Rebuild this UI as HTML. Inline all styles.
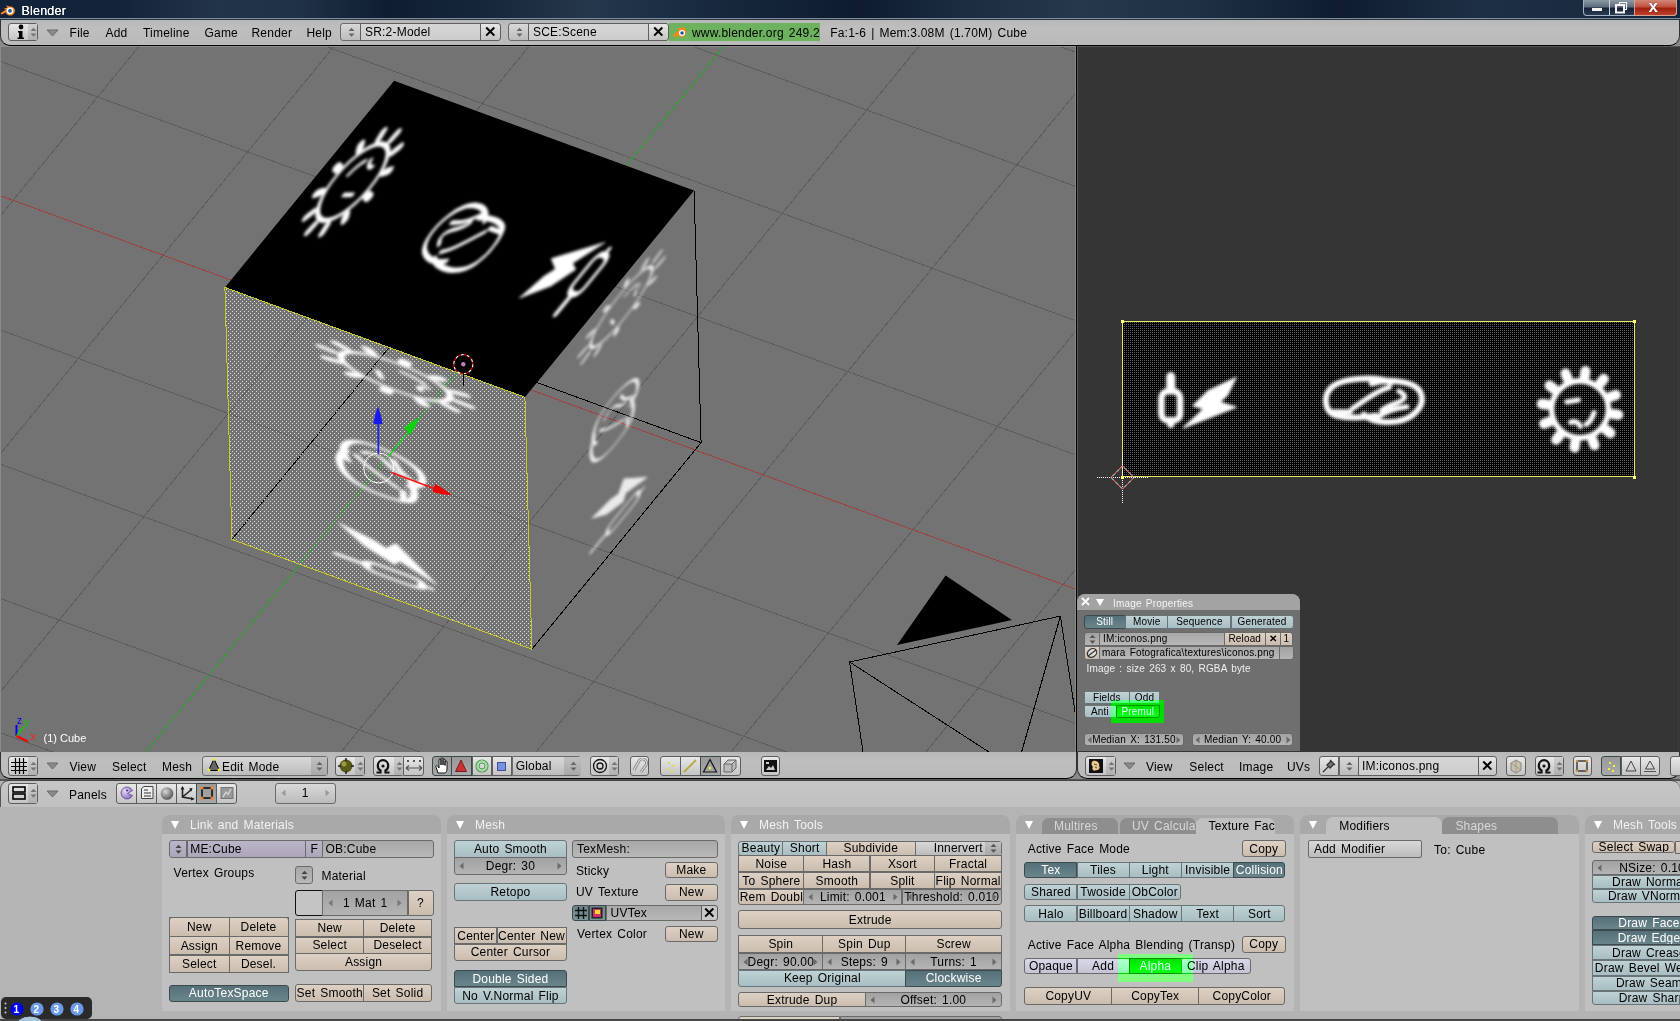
<!DOCTYPE html><html><head><meta charset="utf-8"><style>
html,body{margin:0;padding:0;}
body{width:1680px;height:1021px;position:relative;overflow:hidden;background:#b4b4b4;font-family:"Liberation Sans",sans-serif;}
body>div,body>span,body>svg{position:absolute;}
.t{position:absolute;white-space:nowrap;line-height:1.15;}
</style></head><body>
<div style="left:0;top:0;width:1680px;height:18px;background:linear-gradient(90deg,#12223a 0.0%,#13233a 7.1%,#22344a 13.1%,#1f3146 17.9%,#0f1d31 23.2%,#152539 28.0%,#25374b 35.1%,#182a3f 41.7%,#0e1b2e 51.2%,#1b2c41 57.1%,#26384c 64.3%,#1e3044 71.4%,#0f1c2f 79.8%,#1e3045 88.1%,#1a2b40 94.0%,#16263a 100.0%)"></div>
<div style="left:0;top:18px;width:1680px;height:1px;background:#7d8c9c"></div>
<div style="left:0;top:19px;width:1680px;height:1px;background:#2a3440"></div>
<svg style="left:0;top:2px" width="16" height="14" viewBox="0 0 16 14">
      <path d="M0.5,11 L6,7.5 L3.5,6 L7.5,6 L6,3.5 L10,4.5 C13,4.5 15,6.5 15,8.5 C15,11.5 12.5,13.5 10,13.5 C7.5,13.5 6,12 6,10.5 L1.5,12.5 Z" fill="#f5841f"/>
      <circle cx="10" cy="8.8" r="3.4" fill="#fff"/><circle cx="10" cy="8.8" r="1.9" fill="#1e56a0"/></svg>
<span class="t" style="left:21.5px;top:4px;font-size:12.5px;color:#fff;word-spacing:1.56px;letter-spacing:0.213px;text-shadow:0 0 0.4px #fff;">Blender</span>
<div style="left:1583px;top:0;width:94px;height:16px;border:1px solid #9fb0c0;border-top:none;border-radius:0 0 4px 4px;box-sizing:border-box;background:linear-gradient(#8d9aa6 0%,#5e6e7e 45%,#16243a 55%,#2a3a50 100%)"></div>
<div style="left:1634px;top:0;width:43px;height:16px;border:1px solid #d8a090;border-top:none;border-radius:0 0 4px 0;box-sizing:border-box;background:linear-gradient(#d08878 0%,#c05040 45%,#a02010 55%,#c04030 100%)"></div>
<div style="left:1609px;top:0;width:1px;height:15px;background:#c8d4e0"></div>
<div style="left:1592px;top:8px;width:10px;height:3px;background:#f4f4f4"></div>
<svg style="left:1614px;top:1px" width="14" height="13"><path d="M5.5,3 V1.5 H12.5 V8.5 H10.5" fill="none" stroke="#f4f4f4" stroke-width="1.2"/><rect x="2" y="4" width="8" height="7.5" fill="none" stroke="#f4f4f4" stroke-width="2"/></svg>
<span class="t" style="left:1648.5px;top:-3.5px;font-size:17px;color:#fff;word-spacing:2.12px;letter-spacing:0.289px;font-weight:bold;text-shadow:0 0 1px #400;">x</span>
<div style="left:0px;top:20px;width:1680px;height:26px;background:#8a8a8a"></div>
<div style="left:0px;top:20px;width:1680px;height:26px;background:linear-gradient(#b8b8b8,#bebebe 30%,#bababa);border-bottom:1px solid #000;border-left:1px solid #333;border-right:1px solid #333;box-sizing:border-box;border-radius:0 0 10px 10px;"></div>
<div style="left:0px;top:46px;width:1076px;height:706px;background:#737373"></div>
<svg style="left:0;top:46px" width="1076" height="706" viewBox="0 46 1076 706">
<defs><clipPath id="vc"><rect x="0" y="46" width="1076" height="706"/></clipPath>
<filter id="bl" x="-20%" y="-20%" width="140%" height="140%"><feGaussianBlur stdDeviation="1.5"/></filter>
<filter id="halo" x="-20%" y="-20%" width="140%" height="140%"><feGaussianBlur in="SourceAlpha" stdDeviation="2.2" result="b"/><feFlood flood-color="#000" flood-opacity="0.3"/><feComposite in2="b" operator="in" result="h"/><feGaussianBlur in="SourceGraphic" stdDeviation="1.4" result="s"/><feMerge><feMergeNode in="h"/><feMergeNode in="s"/></feMerge></filter>
<pattern id="stip" width="4" height="4" patternUnits="userSpaceOnUse" x="2" y="1"><rect width="1" height="1" fill="#dcdcdc"/><rect x="2" y="2" width="1" height="1" fill="#dcdcdc"/></pattern>
<symbol id="tex" viewBox="0 0 263 80" width="263" height="80" overflow="visible"><g fill="none" stroke="#fff" stroke-linecap="round" stroke-linejoin="round">
 <path d="M25,28.5 L25,35" stroke-width="3.20"/>
 <rect x="20.2" y="36" width="9.6" height="15" rx="3.5" stroke-width="2.30"/>
 <path d="M25,51 L25,53" stroke-width="2.60"/>
 <path d="M58.5,29 L44,36 L36.5,43.5 L42,45 L31.5,54.8 L58.5,44.2 L50,41.6 L54,38 Z" fill="#fff" stroke="#fff" stroke-width="0.50"/>
 <path d="M138,31.5 C131,28.5 112,28.5 106.5,35 C103,39.5 104,47 110,48.5 C116,50 124,49.5 130,48.5 M128,32 C136,29.5 150,30.5 153,36.5 C156,43 150,50 141,51.5 C133,52.5 127,51 124,48" stroke-width="2.10"/>
 <path d="M108,46.5 L117,46.5 M118,45 C124,41 130,36 137,34 M142,36 C146,38 146,40 141,42 C138,43 135,44 133,46 M130,50 C134,47 138,45 146,44" stroke-width="1.80"/>
 <circle cx="234.8" cy="45.3" r="14.6" stroke-width="2.00"/>
 <path d="M237.2,28.5 L237.6,25.7 M245.3,31.9 L247.0,29.7 M250.6,38.9 L253.2,37.9 M251.6,47.7 L254.4,48.1 M248.2,55.8 L250.4,57.5 M241.2,61.1 L242.2,63.7 M232.4,62.1 L232.0,64.9 M224.3,58.7 L222.6,60.9 M219.0,51.7 L216.4,52.7 M218.0,42.9 L215.2,42.5 M221.4,34.8 L219.2,33.1 M228.4,29.5 L227.4,26.9" stroke-width="3.60"/>
 <path d="M228,41.5 L234,40.5 M242,47 C241,50 240,52 238,53 M230,52 C232,51 234,52 235,54" stroke-width="1.80"/>
</g></symbol>
</defs>
<rect x="0" y="46" width="1076" height="706" fill="#737373"/>
<path d="M-2352.2,945.8 L1247.8,2263.4 M-2267.6,842.5 L1332.4,2160.1 M-2183.0,739.2 L1417.0,2056.8 M-2098.4,635.9 L1501.6,1953.5 M-2013.8,532.6 L1586.2,1850.2 M-1929.2,429.3 L1670.8,1746.9 M-1844.6,326.0 L1755.4,1643.6 M-1760.0,222.7 L1840.0,1540.3 M-1675.4,119.4 L1924.6,1437.0 M-1590.8,16.1 L2009.2,1333.7 M-1506.2,-87.2 L2093.8,1230.4 M-1421.6,-190.5 L2178.4,1127.1 M-1252.4,-397.1 L2347.6,920.5 M-1167.8,-500.4 L2432.2,817.2 M-1083.2,-603.7 L2516.8,713.9 M-998.6,-707.0 L2601.4,610.6 M-914.0,-810.3 L2686.0,507.3 M-829.4,-913.6 L2770.6,404.0 M-744.8,-1016.9 L2855.2,300.7 M-660.2,-1120.2 L2939.8,197.4 M-575.6,-1223.5 L3024.4,94.1 M-491.0,-1326.8 L3109.0,-9.2 M-406.4,-1430.1 L3193.6,-112.5 M-321.8,-1533.4 L3278.2,-215.8 M-2352.2,945.8 L-321.8,-1533.4 M-2202.2,1000.7 L-171.8,-1478.5 M-2052.2,1055.6 L-21.8,-1423.6 M-1902.2,1110.5 L128.2,-1368.7 M-1752.2,1165.4 L278.2,-1313.8 M-1602.2,1220.3 L428.2,-1258.9 M-1452.2,1275.2 L578.2,-1204.0 M-1302.2,1330.1 L728.2,-1149.1 M-1152.2,1385.0 L878.2,-1094.2 M-1002.2,1439.9 L1028.2,-1039.3 M-852.2,1494.8 L1178.2,-984.4 M-702.2,1549.7 L1328.2,-929.5 M-402.2,1659.5 L1628.2,-819.7 M-252.2,1714.4 L1778.2,-764.8 M-102.2,1769.3 L1928.2,-709.9 M47.8,1824.2 L2078.2,-655.0 M197.8,1879.1 L2228.2,-600.1 M347.8,1934.0 L2378.2,-545.2 M497.8,1988.9 L2528.2,-490.3 M647.8,2043.8 L2678.2,-435.4 M797.8,2098.7 L2828.2,-380.5 M947.8,2153.6 L2978.2,-325.6 M1097.8,2208.5 L3128.2,-270.7 M1247.8,2263.4 L3278.2,-215.8" stroke="#5d5d5d" stroke-width="1" fill="none" shape-rendering="crispEdges"/>
<path d="M-1337.0,-293.8 L2263.0,1023.8" stroke="#a04040" stroke-width="1" shape-rendering="crispEdges"/>
<path d="M-552.2,1604.6 L1478.2,-874.6" stroke="#30a030" stroke-width="1" shape-rendering="crispEdges"/>
<path d="M897,645 L945.6,575.4 L1011.9,620 Z" fill="#000"/>
<path d="M849.6,662 L1060.4,616.1 M849.6,662 L863,752 M849.6,662 L989,752 M1060.4,616.1 L1021.6,752 M1060.4,616.1 L1076,718" stroke="#000" stroke-width="1" fill="none" shape-rendering="crispEdges"/>
<path d="M231.9,539.4 L401.1,332.8 L701.1,442.6" stroke="#000" stroke-width="1" fill="none" shape-rendering="crispEdges"/>
<g filter="url(#halo)" opacity="0.85"><g transform="matrix(-0.02662 -0.95817 2.11500 -2.58250 531.90 649.20)"><g fill="none" stroke="#fff" stroke-linecap="round" stroke-linejoin="round">
 <path d="M25,28.5 L25,35" stroke-width="2.24"/>
 <rect x="20.2" y="36" width="9.6" height="15" rx="3.5" stroke-width="1.61"/>
 <path d="M25,51 L25,53" stroke-width="1.82"/>
 <path d="M58.5,29 L44,36 L36.5,43.5 L42,45 L31.5,54.8 L58.5,44.2 L50,41.6 L54,38 Z" fill="#fff" stroke="#fff" stroke-width="0.35"/>
 <path d="M138,31.5 C131,28.5 112,28.5 106.5,35 C103,39.5 104,47 110,48.5 C116,50 124,49.5 130,48.5 M128,32 C136,29.5 150,30.5 153,36.5 C156,43 150,50 141,51.5 C133,52.5 127,51 124,48" stroke-width="1.47"/>
 <path d="M108,46.5 L117,46.5 M118,45 C124,41 130,36 137,34 M142,36 C146,38 146,40 141,42 C138,43 135,44 133,46 M130,50 C134,47 138,45 146,44" stroke-width="1.26"/>
 <circle cx="234.8" cy="45.3" r="14.6" stroke-width="1.40"/>
 <path d="M237.2,28.5 L237.6,25.7 M245.3,31.9 L247.0,29.7 M250.6,38.9 L253.2,37.9 M251.6,47.7 L254.4,48.1 M248.2,55.8 L250.4,57.5 M241.2,61.1 L242.2,63.7 M232.4,62.1 L232.0,64.9 M224.3,58.7 L222.6,60.9 M219.0,51.7 L216.4,52.7 M218.0,42.9 L215.2,42.5 M221.4,34.8 L219.2,33.1 M228.4,29.5 L227.4,26.9" stroke-width="2.52"/>
 <path d="M228,41.5 L234,40.5 M242,47 C241,50 240,52 238,53 M230,52 C232,51 234,52 235,54" stroke-width="1.26"/>
</g></g></g>
<path d="M224.9,287.4 L524.9,397.2 L531.9,649.2 L231.9,539.4 Z" fill="url(#stip)"/>
<g filter="url(#halo)"><g transform="matrix(-0.02662 -0.95817 3.75000 1.37250 231.90 539.40)"><g fill="none" stroke="#fff" stroke-linecap="round" stroke-linejoin="round">
 <path d="M25,28.5 L25,35" stroke-width="3.20"/>
 <rect x="20.2" y="36" width="9.6" height="15" rx="3.5" stroke-width="2.30"/>
 <path d="M25,51 L25,53" stroke-width="2.60"/>
 <path d="M58.5,29 L44,36 L36.5,43.5 L42,45 L31.5,54.8 L58.5,44.2 L50,41.6 L54,38 Z" fill="#fff" stroke="#fff" stroke-width="0.50"/>
 <path d="M138,31.5 C131,28.5 112,28.5 106.5,35 C103,39.5 104,47 110,48.5 C116,50 124,49.5 130,48.5 M128,32 C136,29.5 150,30.5 153,36.5 C156,43 150,50 141,51.5 C133,52.5 127,51 124,48" stroke-width="2.10"/>
 <path d="M108,46.5 L117,46.5 M118,45 C124,41 130,36 137,34 M142,36 C146,38 146,40 141,42 C138,43 135,44 133,46 M130,50 C134,47 138,45 146,44" stroke-width="1.80"/>
 <circle cx="234.8" cy="45.3" r="14.6" stroke-width="2.00"/>
 <path d="M237.2,28.5 L237.6,25.7 M245.3,31.9 L247.0,29.7 M250.6,38.9 L253.2,37.9 M251.6,47.7 L254.4,48.1 M248.2,55.8 L250.4,57.5 M241.2,61.1 L242.2,63.7 M232.4,62.1 L232.0,64.9 M224.3,58.7 L222.6,60.9 M219.0,51.7 L216.4,52.7 M218.0,42.9 L215.2,42.5 M221.4,34.8 L219.2,33.1 M228.4,29.5 L227.4,26.9" stroke-width="3.60"/>
 <path d="M228,41.5 L234,40.5 M242,47 C241,50 240,52 238,53 M230,52 C232,51 234,52 235,54" stroke-width="1.80"/>
</g></g></g>
<path d="M224.9,287.4 L524.9,397.2 L694.1,190.6 L394.1,80.8 Z" fill="#000"/>
<g filter="url(#bl)"><g transform="matrix(-1.14068 -0.41749 2.11500 -2.58250 524.90 397.20)"><g fill="none" stroke="#fff" stroke-linecap="round" stroke-linejoin="round">
 <path d="M25,28.5 L25,35" stroke-width="3.20"/>
 <rect x="20.2" y="36" width="9.6" height="15" rx="3.5" stroke-width="2.30"/>
 <path d="M25,51 L25,53" stroke-width="2.60"/>
 <path d="M58.5,29 L44,36 L36.5,43.5 L42,45 L31.5,54.8 L58.5,44.2 L50,41.6 L54,38 Z" fill="#fff" stroke="#fff" stroke-width="0.50"/>
 <path d="M138,31.5 C131,28.5 112,28.5 106.5,35 C103,39.5 104,47 110,48.5 C116,50 124,49.5 130,48.5 M128,32 C136,29.5 150,30.5 153,36.5 C156,43 150,50 141,51.5 C133,52.5 127,51 124,48" stroke-width="2.10"/>
 <path d="M108,46.5 L117,46.5 M118,45 C124,41 130,36 137,34 M142,36 C146,38 146,40 141,42 C138,43 135,44 133,46 M130,50 C134,47 138,45 146,44" stroke-width="1.80"/>
 <circle cx="234.8" cy="45.3" r="14.6" stroke-width="2.00"/>
 <path d="M237.2,28.5 L237.6,25.7 M245.3,31.9 L247.0,29.7 M250.6,38.9 L253.2,37.9 M251.6,47.7 L254.4,48.1 M248.2,55.8 L250.4,57.5 M241.2,61.1 L242.2,63.7 M232.4,62.1 L232.0,64.9 M224.3,58.7 L222.6,60.9 M219.0,51.7 L216.4,52.7 M218.0,42.9 L215.2,42.5 M221.4,34.8 L219.2,33.1 M228.4,29.5 L227.4,26.9" stroke-width="3.60"/>
 <path d="M228,41.5 L234,40.5 M242,47 C241,50 240,52 238,53 M230,52 C232,51 234,52 235,54" stroke-width="1.80"/>
</g></g></g>
<path d="M694.1,190.6 L701.1,442.6 L531.9,649.2" stroke="#000" stroke-width="1" fill="none" shape-rendering="crispEdges"/>
<path d="M224.9,287.4 L524.9,397.2 L531.9,649.2 L231.9,539.4 Z" stroke="#c8c828" stroke-width="1" fill="none" shape-rendering="crispEdges"/>
<circle cx="463.3" cy="364.2" r="9.5" fill="none" stroke="#fff" stroke-width="1.2" stroke-dasharray="3 3"/>
<circle cx="463.3" cy="364.2" r="9.5" fill="none" stroke="#d00" stroke-width="1.2" stroke-dasharray="3 3" stroke-dashoffset="3"/>
<path d="M463.3,354 L463.3,374 M453,364.2 L473.5,364.2" stroke="#000" stroke-width="1" opacity="0"/>
<path d="M463.5,373 L463.5,386" stroke="#000" stroke-width="1"/>
<circle cx="463.3" cy="364.2" r="2.2" fill="#c080c0"/>
<circle cx="378.7" cy="468" r="15" fill="none" stroke="#fff" stroke-width="1"/>
<path d="M378.3,454 L378.3,420" stroke="#2020ff" stroke-width="1.6"/><path d="M373.5,424 C374,418 376,412 377.8,406.5 C380,412 382,418 382.5,424 Z" fill="#1818f0"/>
<path d="M388.5,456.5 L410,430" stroke="#20d020" stroke-width="1.2"/><path d="M404,428 C408,424 413,420 419.5,417.5 C417,424 414,430 410.5,434.5 Z" fill="#10d010"/>
<path d="M391.5,472.5 L438,490" stroke="#ff1010" stroke-width="1.5"/><path d="M435,484 C441,487 447,491 452,495 C446,495 440,494 432.5,492 Z" fill="#f00000"/>
<path d="M16.5,736 L16.5,725" stroke="#0000ff" stroke-width="2"/><path d="M16.5,736 L23.5,727" stroke="#00d000" stroke-width="1.5"/><path d="M16.5,736 L28,741.5" stroke="#ff0000" stroke-width="2"/>
<text x="17" y="724" font-family="Liberation Sans" font-size="10" fill="#0000ff">z</text><text x="24" y="726" font-family="Liberation Sans" font-size="10" fill="#00d000">y</text><text x="30.5" y="739.5" font-family="Liberation Sans" font-size="10" fill="#ff2020">x</text>
<text x="43.5" y="741.5" font-family="Liberation Sans" font-size="11" fill="#fff">(1) Cube</text>
</svg>
<div style="left:1077px;top:46px;width:603px;height:706px;background:#353535"></div>
<div style="left:1076px;top:46px;width:1px;height:706px;background:#000"></div>
<div style="left:0px;top:46px;width:1076px;height:1px;background:#8c8c8c"></div>
<div style="left:0px;top:46px;width:1px;height:706px;background:#8c8c8c"></div>
<div style="left:1075px;top:46px;width:1px;height:706px;background:#888"></div>
<div style="left:1077px;top:46px;width:603px;height:1px;background:#585858"></div>
<div style="left:1077px;top:46px;width:1px;height:706px;background:#585858"></div>
<div style="left:1678px;top:46px;width:1px;height:706px;background:#3c3c3c"></div>
<div style="left:0px;top:752px;width:1680px;height:28px;background:#8a8a8a"></div>
<div style="left:0px;top:752px;width:1077px;height:27px;background:linear-gradient(#b8b8b8,#bebebe 30%,#bababa);border-bottom:1px solid #000;border-left:1px solid #333;border-right:1px solid #333;box-sizing:border-box;border-radius:0 0 10px 10px;"></div>
<div style="left:1077px;top:752px;width:603px;height:27px;background:linear-gradient(#b8b8b8,#bebebe 30%,#bababa);border-bottom:1px solid #000;border-left:1px solid #333;border-right:1px solid #333;box-sizing:border-box;border-radius:0 0 10px 10px;"></div>
<div style="left:0px;top:779px;width:1680px;height:1px;background:#222"></div>
<div style="left:0px;top:779px;width:1680px;height:2px;background:#555"></div>
<div style="left:0px;top:780px;width:1680px;height:27px;background:linear-gradient(#c6c6c6,#c0c0c0);border-radius:9px 9px 0 0;border-top:1px solid #444;border-left:1px solid #555;box-sizing:border-box;"></div>
<div style="left:0px;top:807px;width:1680px;height:214px;background:#b4b4b4"></div>
<div style="left:8px;top:23px;width:30px;height:18px;box-sizing:border-box;border:1px solid #5e5e5e;border-radius:3px 3px 3px 3px;background:linear-gradient(#e8e8e8,#c4c4c4);overflow:hidden;"></div>
<div style="left:28px;top:24px;width:9px;height:16px;background:linear-gradient(#d0d0d0,#b0b0b0)"></div>
<svg style="left:30px;top:27.0px" width="7" height="11"><path d="M0.5,4 L3.5,0.8 L6.5,4 Z M0.5,6.5 L3.5,9.7 L6.5,6.5 Z" fill="#777"/></svg>
<svg style="left:16px;top:24px" width="10" height="16"><circle cx="5" cy="3" r="2.4" fill="#000"/><path d="M2,7 L6.5,7 L6.5,13.5 L8,13.5 L8,15 L1.5,15 L1.5,13.5 L3,13.5 L3,8.5 L2,8.5 Z" fill="#000"/></svg>
<svg style="left:46px;top:29px" width="13" height="8"><path d="M1,1 L12,1 L6.5,7 Z" fill="#8a8a8a" stroke="#6a6a6a" stroke-width="1"/></svg>
<span class="t" style="left:69.6px;top:26.8px;font-size:12px;color:#000;word-spacing:1.5px;letter-spacing:0.204px;">File</span>
<span class="t" style="left:105.5px;top:26.8px;font-size:12px;color:#000;word-spacing:1.5px;letter-spacing:0.204px;">Add</span>
<span class="t" style="left:143px;top:26.8px;font-size:12px;color:#000;word-spacing:1.5px;letter-spacing:0.204px;">Timeline</span>
<span class="t" style="left:204.5px;top:26.8px;font-size:12px;color:#000;word-spacing:1.5px;letter-spacing:0.204px;">Game</span>
<span class="t" style="left:251.5px;top:26.8px;font-size:12px;color:#000;word-spacing:1.5px;letter-spacing:0.204px;">Render</span>
<span class="t" style="left:306.4px;top:26.8px;font-size:12px;color:#000;word-spacing:1.5px;letter-spacing:0.204px;">Help</span>
<div style="left:340px;top:23px;width:21px;height:18px;box-sizing:border-box;border:1px solid #6a6a6a;border-radius:3px 0px 0px 3px;background:linear-gradient(#d8d8d8,#bcbcbc);overflow:hidden;"></div>
<svg style="left:347.5px;top:27px" width="7" height="11"><path d="M0.5,4 L3.5,0.8 L6.5,4 Z M0.5,6.5 L3.5,9.7 L6.5,6.5 Z" fill="#666"/></svg>
<div style="left:360px;top:23px;width:121px;height:18px;box-sizing:border-box;border:1px solid #5e5e5e;border-radius:0px 0px 0px 0px;background:linear-gradient(#d6d6d6,#cdcdcd);overflow:hidden;"><span style="display:flex;align-items:center;justify-content:flex-start;width:100%;height:100%;padding:0 4px;box-sizing:border-box;font-size:12px;color:#000;white-space:nowrap;overflow:hidden;word-spacing:1.5px;letter-spacing:0.204px;">SR:2-Model</span></div>
<div style="left:480px;top:23px;width:21px;height:18px;box-sizing:border-box;border:1px solid #5e5e5e;border-radius:0px 3px 3px 0px;background:linear-gradient(#e8e8e8,#c4c4c4);overflow:hidden;"><span style="display:flex;align-items:center;justify-content:center;width:100%;height:100%;padding:0 0px;box-sizing:border-box;font-size:12px;color:#000;white-space:nowrap;overflow:hidden;word-spacing:1.5px;letter-spacing:0.204px;"><b style="font-size:15px">&#x2715;</b></span></div>
<div style="left:508px;top:23px;width:21px;height:18px;box-sizing:border-box;border:1px solid #6a6a6a;border-radius:3px 0px 0px 3px;background:linear-gradient(#d8d8d8,#bcbcbc);overflow:hidden;"></div>
<svg style="left:515.5px;top:27px" width="7" height="11"><path d="M0.5,4 L3.5,0.8 L6.5,4 Z M0.5,6.5 L3.5,9.7 L6.5,6.5 Z" fill="#666"/></svg>
<div style="left:528px;top:23px;width:121px;height:18px;box-sizing:border-box;border:1px solid #5e5e5e;border-radius:0px 0px 0px 0px;background:linear-gradient(#d6d6d6,#cdcdcd);overflow:hidden;"><span style="display:flex;align-items:center;justify-content:flex-start;width:100%;height:100%;padding:0 4px;box-sizing:border-box;font-size:12px;color:#000;white-space:nowrap;overflow:hidden;word-spacing:1.5px;letter-spacing:0.204px;">SCE:Scene</span></div>
<div style="left:648px;top:23px;width:21px;height:18px;box-sizing:border-box;border:1px solid #5e5e5e;border-radius:0px 3px 3px 0px;background:linear-gradient(#e8e8e8,#c4c4c4);overflow:hidden;"><span style="display:flex;align-items:center;justify-content:center;width:100%;height:100%;padding:0 0px;box-sizing:border-box;font-size:12px;color:#000;white-space:nowrap;overflow:hidden;word-spacing:1.5px;letter-spacing:0.204px;"><b style="font-size:15px">&#x2715;</b></span></div>
<div style="left:668.5px;top:23px;width:151.5px;height:18px;background:#6db35f"></div>
<svg style="left:672px;top:25px" width="16" height="14" viewBox="0 0 16 14">
      <path d="M1,10 L7,5 L5,3 L9,3 L11,2 C14,3 15,6 14,9 C13,12 9,13 7,11 L2,12 Z" fill="#f08a18"/>
      <circle cx="10" cy="8" r="3" fill="#fff"/><circle cx="10" cy="8" r="1.7" fill="#1d4f9a"/></svg>
<span class="t" style="left:692px;top:26.8px;font-size:12px;color:#000;word-spacing:1.5px;letter-spacing:0.204px;">www.blender.org 249.2</span>
<span class="t" style="left:830.2px;top:26.8px;font-size:12px;color:#000;word-spacing:1.5px;letter-spacing:0.204px;">Fa:1-6 | Mem:3.08M (1.70M) Cube</span>
<div style="left:8px;top:756px;width:30px;height:20px;box-sizing:border-box;border:1px solid #5e5e5e;border-radius:3px 3px 3px 3px;background:linear-gradient(#e8e8e8,#c4c4c4);overflow:hidden;"></div>
<div style="left:28px;top:757px;width:9px;height:18px;background:linear-gradient(#d0d0d0,#b0b0b0)"></div>
<svg style="left:30px;top:761.0px" width="7" height="11"><path d="M0.5,4 L3.5,0.8 L6.5,4 Z M0.5,6.5 L3.5,9.7 L6.5,6.5 Z" fill="#777"/></svg>
<svg style="left:11px;top:758px" width="16" height="16" viewBox="0 0 16 16"><path d="M4.5,0 V16 M8.5,0 V16 M12.5,0 V16 M0,4.5 H16 M0,8.5 H16 M0,12.5 H16" stroke="#000" stroke-width="1.2"/></svg>
<svg style="left:46px;top:762px" width="13" height="8"><path d="M1,1 L12,1 L6.5,7 Z" fill="#8a8a8a" stroke="#6a6a6a" stroke-width="1"/></svg>
<span class="t" style="left:69.5px;top:761px;font-size:12px;color:#000;word-spacing:1.5px;letter-spacing:0.204px;">View</span>
<span class="t" style="left:112px;top:761px;font-size:12px;color:#000;word-spacing:1.5px;letter-spacing:0.204px;">Select</span>
<span class="t" style="left:162px;top:761px;font-size:12px;color:#000;word-spacing:1.5px;letter-spacing:0.204px;">Mesh</span>
<div style="left:201.5px;top:756px;width:126.0px;height:20px;box-sizing:border-box;border:1px solid #6a6a6a;border-radius:3px 3px 3px 3px;background:linear-gradient(#d8d8d8,#bcbcbc);overflow:hidden;"></div>
<div style="left:311px;top:757px;width:16px;height:18px;background:linear-gradient(#c0c0c0,#a8a8a8)"></div>
<svg style="left:316px;top:761px" width="7" height="11"><path d="M0.5,4 L3.5,0.8 L6.5,4 Z M0.5,6.5 L3.5,9.7 L6.5,6.5 Z" fill="#666"/></svg>
<svg style="left:207px;top:757px" width="14" height="16"><path d="M7,2 L12.5,13.5 L1.5,13.5 Z" fill="#666" stroke="#000" stroke-width="1"/><circle cx="7" cy="2.5" r="1.4" fill="#ee3"/><circle cx="12" cy="13" r="1.4" fill="#ee3"/><circle cx="2" cy="13" r="1.4" fill="#ee3"/></svg>
<span class="t" style="left:222px;top:761px;font-size:12px;color:#000;word-spacing:1.5px;letter-spacing:0.204px;">Edit Mode</span>
<div style="left:335px;top:756px;width:30px;height:20px;box-sizing:border-box;border:1px solid #5e5e5e;border-radius:3px 3px 3px 3px;background:linear-gradient(#e8e8e8,#c4c4c4);overflow:hidden;"></div>
<div style="left:355px;top:757px;width:9px;height:18px;background:linear-gradient(#d0d0d0,#b0b0b0)"></div>
<svg style="left:357px;top:761.0px" width="7" height="11"><path d="M0.5,4 L3.5,0.8 L6.5,4 Z M0.5,6.5 L3.5,9.7 L6.5,6.5 Z" fill="#777"/></svg>
<svg style="left:337px;top:757px" width="18" height="18"><circle cx="9" cy="9" r="6.5" fill="#5a5a18"/><circle cx="7" cy="7" r="2.5" fill="#9a9a40"/><path d="M9,1 L9,4 M9,14 L9,17 M1,9 L4,9 M14,9 L17,9" stroke="#222" stroke-width="1.5"/></svg>
<div style="left:373px;top:756px;width:31px;height:20px;box-sizing:border-box;border:1px solid #5e5e5e;border-radius:3px 3px 3px 3px;background:linear-gradient(#e8e8e8,#c4c4c4);overflow:hidden;"></div>
<div style="left:394px;top:757px;width:9px;height:18px;background:linear-gradient(#d0d0d0,#b0b0b0)"></div>
<svg style="left:396px;top:761.0px" width="7" height="11"><path d="M0.5,4 L3.5,0.8 L6.5,4 Z M0.5,6.5 L3.5,9.7 L6.5,6.5 Z" fill="#777"/></svg>
<svg style="left:375px;top:758px" width="16" height="16"><path d="M1.5,14.5 L5.5,14.5 L5.5,12.5 C3.5,11.5 2.8,9.5 2.8,7.8 C2.8,4.5 5.2,2.2 8,2.2 C10.8,2.2 13.2,4.5 13.2,7.8 C13.2,9.5 12.5,11.5 10.5,12.5 L10.5,14.5 L14.5,14.5" fill="none" stroke="#111" stroke-width="2.2"/><circle cx="8" cy="8" r="1.6" fill="#111"/></svg>
<div style="left:403px;top:756px;width:21px;height:20px;box-sizing:border-box;border:1px solid #5e5e5e;border-radius:0px 3px 3px 0px;background:linear-gradient(#e8e8e8,#c4c4c4);overflow:hidden;"></div>
<svg style="left:405px;top:758px" width="18" height="16"><path d="M2,2 h2 v2 h-2z M8,2 h2 v2 h-2z M14,2 h2 v2 h-2z" fill="#555"/><path d="M1,10 H17 M1,10 L4,7.5 M1,10 L4,12.5 M17,10 L14,7.5 M17,10 L14,12.5" stroke="#555" stroke-width="1.2" fill="none"/></svg>
<div style="left:431.7px;top:756px;width:20.30000000000001px;height:20px;box-sizing:border-box;border:1px solid #3c4a4e;border-radius:3px 0px 0px 3px;background:linear-gradient(#56707a,#6a858a);overflow:hidden;background:linear-gradient(#9a9a9a,#a8a8a8);"></div>
<svg style="left:433px;top:757px" width="18" height="18" viewBox="0 0 18 18"><path d="M5,16 L3,10 C2.5,8.5 4,8 5,9.5 L6,11 L6,3 C6,1.5 8,1.5 8,3 L8,8 L8,2 C8,0.5 10,0.5 10,2 L10,8 L10,3 C10,1.5 12,1.5 12,3 L12,8.5 L12,5 C12,3.5 14,3.5 14,5 L14,12 C14,14 13,16 12,16 Z" fill="#fff" stroke="#000" stroke-width="0.9"/></svg>
<div style="left:451.4px;top:756px;width:20.600000000000023px;height:20px;box-sizing:border-box;border:1px solid #3c4a4e;border-radius:0px 0px 0px 0px;background:linear-gradient(#56707a,#6a858a);overflow:hidden;background:linear-gradient(#9a9a9a,#a8a8a8);"></div>
<svg style="left:454px;top:758px" width="14" height="16"><path d="M7,2 L12.5,13.5 L1.5,13.5 Z" fill="#d03030" stroke="#601010" stroke-width="0.8"/></svg>
<div style="left:471.7px;top:756px;width:20.30000000000001px;height:20px;box-sizing:border-box;border:1px solid #5e5e5e;border-radius:0px 0px 0px 0px;background:linear-gradient(#e8e8e8,#c4c4c4);overflow:hidden;"></div>
<svg style="left:474px;top:758px" width="16" height="16"><circle cx="8" cy="8" r="6" fill="none" stroke="#50a050" stroke-width="1.2"/><circle cx="8" cy="8" r="4.5" fill="none" stroke="#a8d8a8" stroke-width="1.8"/><circle cx="8" cy="8" r="3" fill="none" stroke="#50a050" stroke-width="1"/></svg>
<div style="left:491.7px;top:756px;width:20.30000000000001px;height:20px;box-sizing:border-box;border:1px solid #5e5e5e;border-radius:0px 0px 0px 0px;background:linear-gradient(#e8e8e8,#c4c4c4);overflow:hidden;"></div>
<div style="left:496.5px;top:761.5px;width:9px;height:9px;background:#7890e0;border:1px solid #405090;box-sizing:border-box"></div>
<div style="left:511.7px;top:756px;width:69.69999999999999px;height:20px;box-sizing:border-box;border:1px solid #6a6a6a;border-radius:0px 3px 3px 0px;background:linear-gradient(#d8d8d8,#bcbcbc);overflow:hidden;"><span style="display:flex;align-items:center;justify-content:flex-start;width:100%;height:100%;padding:0 3px;box-sizing:border-box;font-size:12px;color:#000;white-space:nowrap;overflow:hidden;word-spacing:1.5px;letter-spacing:0.204px;">Global</span></div>
<div style="left:564px;top:757px;width:17px;height:18px;background:linear-gradient(#c0c0c0,#a8a8a8)"></div>
<svg style="left:569.5px;top:761px" width="7" height="11"><path d="M0.5,4 L3.5,0.8 L6.5,4 Z M0.5,6.5 L3.5,9.7 L6.5,6.5 Z" fill="#666"/></svg>
<div style="left:589.8px;top:756px;width:29.200000000000045px;height:20px;box-sizing:border-box;border:1px solid #5e5e5e;border-radius:3px 3px 3px 3px;background:linear-gradient(#e8e8e8,#c4c4c4);overflow:hidden;"></div>
<div style="left:609px;top:757px;width:9px;height:18px;background:linear-gradient(#d0d0d0,#b0b0b0)"></div>
<svg style="left:611px;top:761.0px" width="7" height="11"><path d="M0.5,4 L3.5,0.8 L6.5,4 Z M0.5,6.5 L3.5,9.7 L6.5,6.5 Z" fill="#777"/></svg>
<svg style="left:591px;top:757px" width="18" height="18"><circle cx="9" cy="9" r="6.5" fill="none" stroke="#111" stroke-width="1.3"/><circle cx="9" cy="9" r="3" fill="none" stroke="#111" stroke-width="1.3"/></svg>
<div style="left:629.8px;top:756px;width:19.5px;height:20px;box-sizing:border-box;border:1px solid #5e5e5e;border-radius:3px 3px 3px 3px;background:linear-gradient(#e8e8e8,#c4c4c4);overflow:hidden;"></div>
<svg style="left:631px;top:758px" width="17" height="16"><path d="M3,12 L8,3 A4,4 0 0 1 15,7 L10,14" fill="none" stroke="#888" stroke-width="3"/><path d="M3,12 L8,3 A4,4 0 0 1 15,7 L10,14" fill="none" stroke="#ddd" stroke-width="1.2"/></svg>
<div style="left:659.5px;top:756px;width:21.5px;height:20px;box-sizing:border-box;border:1px solid #5e5e5e;border-radius:3px 0px 0px 3px;background:linear-gradient(#e8e8e8,#c4c4c4);overflow:hidden;"></div>
<svg style="left:662px;top:758px" width="16" height="16"><path d="M6,4 h2v2h-2z M10,7 h2v2h-2z M5,10 h2v2h-2z M9,12 h2v2h-2z" fill="#dd4"/></svg>
<div style="left:680px;top:756px;width:21px;height:20px;box-sizing:border-box;border:1px solid #5e5e5e;border-radius:0px 0px 0px 0px;background:linear-gradient(#e8e8e8,#c4c4c4);overflow:hidden;"></div>
<svg style="left:682px;top:758px" width="16" height="16"><path d="M2,14 L14,2" stroke="#b8a840" stroke-width="1.8"/></svg>
<div style="left:700px;top:756px;width:21px;height:20px;box-sizing:border-box;border:1px solid #3c4a4e;border-radius:0px 0px 0px 0px;background:linear-gradient(#56707a,#6a858a);overflow:hidden;background:linear-gradient(#9a9a9a,#a8a8a8);"></div>
<svg style="left:702px;top:758px" width="16" height="16"><path d="M8,1.5 L14.5,14 L1.5,14 Z" fill="none" stroke="#111" stroke-width="1.2"/><circle cx="8" cy="10" r="1.3" fill="#ee3"/></svg>
<div style="left:720px;top:756px;width:20.5px;height:20px;box-sizing:border-box;border:1px solid #5e5e5e;border-radius:0px 3px 3px 0px;background:linear-gradient(#e8e8e8,#c4c4c4);overflow:hidden;"></div>
<svg style="left:722px;top:758px" width="16" height="16"><path d="M2,6 L6,2 L14,2 L14,10 L10,14 L2,14 Z M2,6 L10,6 L14,2 M10,6 L10,14" fill="#bbb" stroke="#666" stroke-width="1"/></svg>
<div style="left:760.7px;top:756px;width:19.799999999999955px;height:20px;box-sizing:border-box;border:1px solid #5e5e5e;border-radius:3px 3px 3px 3px;background:linear-gradient(#e8e8e8,#c4c4c4);overflow:hidden;"></div>
<svg style="left:763px;top:759px" width="15" height="14"><rect x="1" y="1" width="13" height="12" fill="#111"/><path d="M3,11 L6,7 L8,9 L10,6 L12,11 Z" fill="#ccc"/><rect x="3" y="3" width="3" height="2" fill="#ccc"/></svg>
<div style="left:1085px;top:756px;width:30.59999999999991px;height:20px;box-sizing:border-box;border:1px solid #5e5e5e;border-radius:3px 3px 3px 3px;background:linear-gradient(#e8e8e8,#c4c4c4);overflow:hidden;"></div>
<div style="left:1105.6px;top:757px;width:9px;height:18px;background:linear-gradient(#d0d0d0,#b0b0b0)"></div>
<svg style="left:1107.6px;top:761.0px" width="7" height="11"><path d="M0.5,4 L3.5,0.8 L6.5,4 Z M0.5,6.5 L3.5,9.7 L6.5,6.5 Z" fill="#777"/></svg>
<svg style="left:1088px;top:758px" width="16" height="16"><rect x="1" y="1" width="14" height="14" fill="#111"/><path d="M5,3 C9,2 12,5 11,8 C13,10 10,13 8,12 C6,14 3,11 5,9 C3,7 3,4 5,3 Z" fill="#e8c890"/><path d="M6,6 L9,7 M7,9 L9,10" stroke="#553" stroke-width="1"/></svg>
<svg style="left:1123px;top:762px" width="13" height="8"><path d="M1,1 L12,1 L6.5,7 Z" fill="#8a8a8a" stroke="#6a6a6a" stroke-width="1"/></svg>
<span class="t" style="left:1146px;top:761px;font-size:12px;color:#000;word-spacing:1.5px;letter-spacing:0.204px;">View</span>
<span class="t" style="left:1189.3px;top:761px;font-size:12px;color:#000;word-spacing:1.5px;letter-spacing:0.204px;">Select</span>
<span class="t" style="left:1239px;top:761px;font-size:12px;color:#000;word-spacing:1.5px;letter-spacing:0.204px;">Image</span>
<span class="t" style="left:1287px;top:761px;font-size:12px;color:#000;word-spacing:1.5px;letter-spacing:0.204px;">UVs</span>
<div style="left:1318.7px;top:756px;width:20.799999999999955px;height:20px;box-sizing:border-box;border:1px solid #5e5e5e;border-radius:3px 0px 0px 3px;background:linear-gradient(#e8e8e8,#c4c4c4);overflow:hidden;"></div>
<svg style="left:1321px;top:757px" width="17" height="17"><path d="M2,15 L7,10" stroke="#333" stroke-width="1.3"/><path d="M6,8 L10,4 L13,7 L9,11 Z M9,3 L14,8" fill="#777" stroke="#333" stroke-width="1.3"/></svg>
<div style="left:1338.5px;top:756px;width:20.5px;height:20px;box-sizing:border-box;border:1px solid #6a6a6a;border-radius:0px 0px 0px 0px;background:linear-gradient(#d8d8d8,#bcbcbc);overflow:hidden;"></div>
<svg style="left:1345.5px;top:761px" width="7" height="11"><path d="M0.5,4 L3.5,0.8 L6.5,4 Z M0.5,6.5 L3.5,9.7 L6.5,6.5 Z" fill="#666"/></svg>
<div style="left:1358px;top:756px;width:121px;height:20px;box-sizing:border-box;border:1px solid #5e5e5e;border-radius:0px 0px 0px 0px;background:linear-gradient(#d6d6d6,#cdcdcd);overflow:hidden;"><span style="display:flex;align-items:center;justify-content:flex-start;width:100%;height:100%;padding:0 3px;box-sizing:border-box;font-size:12px;color:#000;white-space:nowrap;overflow:hidden;word-spacing:1.5px;letter-spacing:0.204px;">IM:iconos.png</span></div>
<div style="left:1478px;top:756px;width:19px;height:20px;box-sizing:border-box;border:1px solid #5e5e5e;border-radius:0px 3px 3px 0px;background:linear-gradient(#e8e8e8,#c4c4c4);overflow:hidden;"><span style="display:flex;align-items:center;justify-content:center;width:100%;height:100%;padding:0 0px;box-sizing:border-box;font-size:12px;color:#000;white-space:nowrap;overflow:hidden;word-spacing:1.5px;letter-spacing:0.204px;"><b style="font-size:15px">&#x2715;</b></span></div>
<div style="left:1506px;top:756px;width:20px;height:20px;box-sizing:border-box;border:1px solid #5e5e5e;border-radius:3px 3px 3px 3px;background:linear-gradient(#e8e8e8,#c4c4c4);overflow:hidden;"></div>
<svg style="left:1508px;top:758px" width="16" height="16"><path d="M3,5 L8,2 L13,5 L13,12 L8,15 L3,12 Z" fill="#c8c0a8" stroke="#777" stroke-width="0.8"/><path d="M8,2 L8,15 M3,5 L13,12" stroke="#888" stroke-width="0.6"/></svg>
<div style="left:1534.5px;top:756px;width:29.0px;height:20px;box-sizing:border-box;border:1px solid #5e5e5e;border-radius:3px 3px 3px 3px;background:linear-gradient(#e8e8e8,#c4c4c4);overflow:hidden;"></div>
<div style="left:1553.5px;top:757px;width:9px;height:18px;background:linear-gradient(#d0d0d0,#b0b0b0)"></div>
<svg style="left:1555.5px;top:761.0px" width="7" height="11"><path d="M0.5,4 L3.5,0.8 L6.5,4 Z M0.5,6.5 L3.5,9.7 L6.5,6.5 Z" fill="#777"/></svg>
<svg style="left:1536px;top:758px" width="16" height="16"><path d="M1.5,14.5 L5.5,14.5 L5.5,12.5 C3.5,11.5 2.8,9.5 2.8,7.8 C2.8,4.5 5.2,2.2 8,2.2 C10.8,2.2 13.2,4.5 13.2,7.8 C13.2,9.5 12.5,11.5 10.5,12.5 L10.5,14.5 L14.5,14.5" fill="none" stroke="#111" stroke-width="2.2"/><circle cx="8" cy="8" r="1.6" fill="#111"/></svg>
<div style="left:1572.5px;top:756px;width:19.5px;height:20px;box-sizing:border-box;border:1px solid #5e5e5e;border-radius:3px 3px 3px 3px;background:linear-gradient(#e8e8e8,#c4c4c4);overflow:hidden;"></div>
<svg style="left:1574px;top:758px" width="16" height="16"><rect x="3" y="3" width="10" height="10" fill="none" stroke="#333" stroke-width="1.4"/><circle cx="3" cy="3" r="1.3" fill="#e09040"/><circle cx="13" cy="3" r="1.3" fill="#e09040"/><circle cx="3" cy="13" r="1.3" fill="#e09040"/><circle cx="13" cy="13" r="1.3" fill="#e09040"/></svg>
<div style="left:1600.8px;top:756px;width:20.700000000000045px;height:20px;box-sizing:border-box;border:1px solid #3c4a4e;border-radius:3px 0px 0px 3px;background:linear-gradient(#56707a,#6a858a);overflow:hidden;background:linear-gradient(#9a9a9a,#a8a8a8);"></div>
<svg style="left:1603px;top:758px" width="16" height="16"><path d="M6,4 h2v2h-2z M10,7 h2v2h-2z M5,10 h2v2h-2z M9,12 h2v2h-2z" fill="#ee4"/></svg>
<div style="left:1620.5px;top:756px;width:20.90000000000009px;height:20px;box-sizing:border-box;border:1px solid #5e5e5e;border-radius:0px 0px 0px 0px;background:linear-gradient(#e8e8e8,#c4c4c4);overflow:hidden;"></div>
<svg style="left:1623px;top:758px" width="16" height="16"><path d="M8,3 L13,13 L3,13 Z" fill="none" stroke="#444" stroke-width="1"/></svg>
<div style="left:1640.4px;top:756px;width:19.799999999999955px;height:20px;box-sizing:border-box;border:1px solid #5e5e5e;border-radius:0px 3px 3px 0px;background:linear-gradient(#e8e8e8,#c4c4c4);overflow:hidden;"></div>
<svg style="left:1642px;top:758px" width="16" height="16"><path d="M8,3 L12.5,11 L3.5,11 Z" fill="none" stroke="#444" stroke-width="1"/><path d="M2,13.5 H14" stroke="#555" stroke-width="1"/></svg>
<div style="left:1669.5px;top:756px;width:20.5px;height:20px;box-sizing:border-box;border:1px solid #5e5e5e;border-radius:3px 3px 3px 3px;background:linear-gradient(#e8e8e8,#c4c4c4);overflow:hidden;"></div>
<div style="left:8px;top:783px;width:30px;height:20.5px;box-sizing:border-box;border:1px solid #5e5e5e;border-radius:3px 3px 3px 3px;background:linear-gradient(#e8e8e8,#c4c4c4);overflow:hidden;"></div>
<div style="left:28px;top:784px;width:9px;height:18.5px;background:linear-gradient(#d0d0d0,#b0b0b0)"></div>
<svg style="left:30px;top:788.25px" width="7" height="11"><path d="M0.5,4 L3.5,0.8 L6.5,4 Z M0.5,6.5 L3.5,9.7 L6.5,6.5 Z" fill="#777"/></svg>
<svg style="left:11px;top:785px" width="16" height="16"><rect x="2" y="2" width="12" height="5" fill="none" stroke="#000" stroke-width="1.6"/><rect x="2" y="9" width="12" height="5" fill="none" stroke="#000" stroke-width="1.6"/></svg>
<svg style="left:46px;top:790px" width="13" height="8"><path d="M1,1 L12,1 L6.5,7 Z" fill="#8a8a8a" stroke="#6a6a6a" stroke-width="1"/></svg>
<span class="t" style="left:69px;top:788.5px;font-size:12px;color:#000;word-spacing:1.5px;letter-spacing:0.204px;">Panels</span>
<div style="left:115.5px;top:783px;width:21.0px;height:20.5px;box-sizing:border-box;border:1px solid #5e5e5e;border-radius:3px 0px 0px 3px;background:linear-gradient(#e8e8e8,#c4c4c4);overflow:hidden;"></div>
<svg style="left:118.5px;top:785px" width="16" height="16"><defs><radialGradient id="pg" cx="35%" cy="35%" r="70%"><stop offset="0" stop-color="#e8d8ff"/><stop offset="1" stop-color="#8a70c0"/></radialGradient></defs><path d="M13.5,5.5 A6,6 0 1 0 13.5,10.5 L8.5,8.5 Z" fill="url(#pg)" stroke="#604890" stroke-width="0.8"/><circle cx="8" cy="5.5" r="0.9" fill="#402070"/></svg>
<div style="left:135.5px;top:783px;width:21.0px;height:20.5px;box-sizing:border-box;border:1px solid #5e5e5e;border-radius:0px 0px 0px 0px;background:linear-gradient(#e8e8e8,#c4c4c4);overflow:hidden;"></div>
<svg style="left:138.5px;top:785px" width="16" height="16"><path d="M2.5,3.5 L5,1.5 L14,1.5 L14,13.5 L2.5,13.5 Z" fill="#f0f0f0" stroke="#444" stroke-width="1"/><path d="M5,5 H9 M5,8 H12 M5,11 H12" stroke="#333" stroke-width="1.2"/></svg>
<div style="left:155.5px;top:783px;width:21.0px;height:20.5px;box-sizing:border-box;border:1px solid #5e5e5e;border-radius:0px 0px 0px 0px;background:linear-gradient(#e8e8e8,#c4c4c4);overflow:hidden;"></div>
<svg style="left:158.5px;top:785px" width="16" height="16"><defs><radialGradient id="sg" cx="38%" cy="35%" r="65%"><stop offset="0" stop-color="#d8d8d8"/><stop offset="1" stop-color="#5a5a5a"/></radialGradient></defs><circle cx="8" cy="8.5" r="6.3" fill="url(#sg)"/></svg>
<div style="left:175.5px;top:783px;width:21.0px;height:20.5px;box-sizing:border-box;border:1px solid #5e5e5e;border-radius:0px 0px 0px 0px;background:linear-gradient(#e8e8e8,#c4c4c4);overflow:hidden;"></div>
<svg style="left:178.5px;top:785px" width="16" height="16"><path d="M3.5,2.5 L3.5,12 L14.5,14 M3.5,12 L12,5" stroke="#222" stroke-width="1.6" fill="none"/><path d="M1.5,4.5 L3.5,1 L5.5,4.5 Z M10,3.5 L13.5,3 L12.5,6.5 Z M12,12 L15.5,14 L12,15.5 Z" fill="#222"/></svg>
<div style="left:195.5px;top:783px;width:21.0px;height:20.5px;box-sizing:border-box;border:1px solid #3c4a4e;border-radius:0px 0px 0px 0px;background:linear-gradient(#56707a,#6a858a);overflow:hidden;background:linear-gradient(#9a9a9a,#a8a8a8);"></div>
<svg style="left:198.5px;top:785px" width="16" height="16"><rect x="3" y="3" width="10" height="10" fill="none" stroke="#111" stroke-width="1.6"/><circle cx="3" cy="3" r="1.6" fill="#f08020"/><circle cx="13" cy="3" r="1.6" fill="#f08020"/><circle cx="3" cy="13" r="1.6" fill="#f08020"/><circle cx="13" cy="13" r="1.6" fill="#f08020"/></svg>
<div style="left:215.5px;top:783px;width:21.0px;height:20.5px;box-sizing:border-box;border:1px solid #5e5e5e;border-radius:0px 3px 3px 0px;background:linear-gradient(#e8e8e8,#c4c4c4);overflow:hidden;"></div>
<svg style="left:218.5px;top:785px" width="16" height="16"><rect x="2" y="2.5" width="12" height="11" fill="#999" stroke="#777"/><path d="M4,12 L7,7 L9,9.5 L12,4" stroke="#ddd" stroke-width="1.2" fill="none"/></svg>
<div style="left:275px;top:783px;width:60.5px;height:20.5px;box-sizing:border-box;border:1px solid #6a6a6a;border-radius:3px 3px 3px 3px;background:linear-gradient(#d8d8d8,#bcbcbc);overflow:hidden;"><span style="display:flex;align-items:center;justify-content:center;width:100%;height:100%;padding:0 0px;box-sizing:border-box;font-size:12px;color:#000;white-space:nowrap;overflow:hidden;word-spacing:1.5px;letter-spacing:0.204px;">1</span></div>
<svg style="left:281px;top:789px" width="5" height="8"><path d="M4.5,0.5 L0.5,4 L4.5,7.5 Z" fill="#999"/></svg>
<svg style="left:325px;top:789px" width="5" height="8"><path d="M0.5,0.5 L4.5,4 L0.5,7.5 Z" fill="#999"/></svg>
<div style="left:162px;top:815px;width:279px;height:196px;background:#c0c0c0;border-radius:8px 8px 0 0;"></div>
<div style="left:162px;top:815px;width:279px;height:19px;background:#a9a9a9;border-radius:8px 8px 0 0;"></div>
<svg style="left:170px;top:819.5px" width="10" height="10"><path d="M1,1 L9,1 L5.0,9 Z" fill="#fff" /></svg>
<span class="t" style="left:190px;top:819px;font-size:12px;color:#f2f2f2;word-spacing:1.5px;letter-spacing:0.204px;">Link and Materials</span>
<div style="left:169px;top:840px;width:18px;height:18px;box-sizing:border-box;border:1px solid #6a6a6a;border-radius:3px 0px 0px 3px;background:linear-gradient(#bcb4c8,#ada5ba);overflow:hidden;"></div>
<svg style="left:175px;top:844px" width="7" height="11"><path d="M0.5,4 L3.5,0.8 L6.5,4 Z M0.5,6.5 L3.5,9.7 L6.5,6.5 Z" fill="#444"/></svg>
<div style="left:186.7px;top:840px;width:119.30000000000001px;height:18px;box-sizing:border-box;border:1px solid #6a6a6a;border-radius:0px 0px 0px 0px;background:linear-gradient(#bcb4c8,#ada5ba);overflow:hidden;"><span style="display:flex;align-items:center;justify-content:flex-start;width:100%;height:100%;padding:0 2.5px;box-sizing:border-box;font-size:12px;color:#000;white-space:nowrap;overflow:hidden;word-spacing:1.5px;letter-spacing:0.204px;">ME:Cube</span></div>
<div style="left:305.4px;top:840px;width:17.600000000000023px;height:18px;box-sizing:border-box;border:1px solid #6a6a6a;border-radius:0px 0px 0px 0px;background:linear-gradient(#bcb4c8,#ada5ba);overflow:hidden;"><span style="display:flex;align-items:center;justify-content:center;width:100%;height:100%;padding:0 0px;box-sizing:border-box;font-size:12px;color:#000;white-space:nowrap;overflow:hidden;word-spacing:1.5px;letter-spacing:0.204px;">F</span></div>
<div style="left:322px;top:840px;width:111.69999999999999px;height:18px;box-sizing:border-box;border:1px solid #6a6a6a;border-radius:0px 3px 3px 0px;background:linear-gradient(#a8a8a8,#b8b8b8);overflow:hidden;"><span style="display:flex;align-items:center;justify-content:flex-start;width:100%;height:100%;padding:0 2.5px;box-sizing:border-box;font-size:12px;color:#000;white-space:nowrap;overflow:hidden;word-spacing:1.5px;letter-spacing:0.204px;">OB:Cube</span></div>
<span class="t" style="left:173.6px;top:867px;font-size:12px;color:#000;word-spacing:1.5px;letter-spacing:0.204px;">Vertex Groups</span>
<div style="left:295.2px;top:866.4px;width:17.80000000000001px;height:17.600000000000023px;box-sizing:border-box;border:1px solid #6a6a6a;border-radius:3px 3px 3px 3px;background:linear-gradient(#a8a8a8,#b8b8b8);overflow:hidden;"></div>
<svg style="left:301px;top:870px" width="7" height="11"><path d="M0.5,4 L3.5,0.8 L6.5,4 Z M0.5,6.5 L3.5,9.7 L6.5,6.5 Z" fill="#444"/></svg>
<span class="t" style="left:321.5px;top:869.5px;font-size:12px;color:#000;word-spacing:1.5px;letter-spacing:0.204px;">Material</span>
<div style="left:295.2px;top:889.7px;width:27.5px;height:26.5px;background:#c4c4c4;border:1px solid #111;box-sizing:border-box;border-radius:3px 0 0 3px"></div>
<div style="left:322.3px;top:889.7px;width:85.69999999999999px;height:26.299999999999955px;box-sizing:border-box;border:1px solid #6a6a6a;border-radius:0px 0px 0px 0px;background:linear-gradient(#a2a2a2,#b4b4b4);overflow:hidden;"><span style="display:flex;align-items:center;justify-content:center;width:100%;height:100%;padding:0 0px;box-sizing:border-box;font-size:12px;color:#000;white-space:nowrap;overflow:hidden;word-spacing:1.5px;letter-spacing:0.204px;">1 Mat 1</span></div>
<svg style="left:328px;top:899px" width="5" height="8"><path d="M4.5,0.5 L0.5,4 L4.5,7.5 Z" fill="#777"/></svg>
<svg style="left:397px;top:899px" width="5" height="8"><path d="M0.5,0.5 L4.5,4 L0.5,7.5 Z" fill="#777"/></svg>
<div style="left:407.5px;top:889.7px;width:26.0px;height:26.299999999999955px;box-sizing:border-box;border:1px solid #6a6a6a;border-radius:0px 3px 3px 0px;background:linear-gradient(#ddd1c4,#cbbdae);overflow:hidden;"><span style="display:flex;align-items:center;justify-content:center;width:100%;height:100%;padding:0 0px;box-sizing:border-box;font-size:12px;color:#000;white-space:nowrap;overflow:hidden;word-spacing:1.5px;letter-spacing:0.204px;">?</span></div>
<div style="left:169px;top:917.3px;width:60.5px;height:19.300000000000068px;box-sizing:border-box;border:1px solid #6a6a6a;border-radius:0px 0px 0px 0px;background:linear-gradient(#ddd1c4,#cbbdae);overflow:hidden;"><span style="display:flex;align-items:center;justify-content:center;width:100%;height:100%;padding:0 0px;box-sizing:border-box;font-size:12px;color:#000;white-space:nowrap;overflow:hidden;word-spacing:1.5px;letter-spacing:0.204px;">New</span></div>
<div style="left:228.5px;top:917.3px;width:60.0px;height:19.300000000000068px;box-sizing:border-box;border:1px solid #6a6a6a;border-radius:0px 0px 0px 0px;background:linear-gradient(#ddd1c4,#cbbdae);overflow:hidden;"><span style="display:flex;align-items:center;justify-content:center;width:100%;height:100%;padding:0 0px;box-sizing:border-box;font-size:12px;color:#000;white-space:nowrap;overflow:hidden;word-spacing:1.5px;letter-spacing:0.204px;">Delete</span></div>
<div style="left:169px;top:917.3px;width:119.5px;height:55.700000000000045px;box-sizing:border-box;border:1px solid #6a6a6a;border-radius:3px 3px 3px 3px;background:linear-gradient(#ddd1c4,#cbbdae);overflow:hidden;background:none;"></div>
<div style="left:169px;top:936.1px;width:60.5px;height:18.899999999999977px;box-sizing:border-box;border:1px solid #6a6a6a;border-radius:0px 0px 0px 0px;background:linear-gradient(#ddd1c4,#cbbdae);overflow:hidden;"><span style="display:flex;align-items:center;justify-content:center;width:100%;height:100%;padding:0 0px;box-sizing:border-box;font-size:12px;color:#000;white-space:nowrap;overflow:hidden;word-spacing:1.5px;letter-spacing:0.204px;">Assign</span></div>
<div style="left:228.5px;top:936.1px;width:60.0px;height:18.899999999999977px;box-sizing:border-box;border:1px solid #6a6a6a;border-radius:0px 0px 0px 0px;background:linear-gradient(#ddd1c4,#cbbdae);overflow:hidden;"><span style="display:flex;align-items:center;justify-content:center;width:100%;height:100%;padding:0 0px;box-sizing:border-box;font-size:12px;color:#000;white-space:nowrap;overflow:hidden;word-spacing:1.5px;letter-spacing:0.204px;">Remove</span></div>
<div style="left:169px;top:954.6px;width:60.5px;height:18.399999999999977px;box-sizing:border-box;border:1px solid #6a6a6a;border-radius:0px 0px 0px 0px;background:linear-gradient(#ddd1c4,#cbbdae);overflow:hidden;"><span style="display:flex;align-items:center;justify-content:center;width:100%;height:100%;padding:0 0px;box-sizing:border-box;font-size:12px;color:#000;white-space:nowrap;overflow:hidden;word-spacing:1.5px;letter-spacing:0.204px;">Select</span></div>
<div style="left:228.5px;top:954.6px;width:60.0px;height:18.399999999999977px;box-sizing:border-box;border:1px solid #6a6a6a;border-radius:0px 0px 0px 0px;background:linear-gradient(#ddd1c4,#cbbdae);overflow:hidden;"><span style="display:flex;align-items:center;justify-content:center;width:100%;height:100%;padding:0 0px;box-sizing:border-box;font-size:12px;color:#000;white-space:nowrap;overflow:hidden;word-spacing:1.5px;letter-spacing:0.204px;">Desel.</span></div>
<div style="left:295.2px;top:918.7px;width:69.0px;height:18.299999999999955px;box-sizing:border-box;border:1px solid #6a6a6a;border-radius:0px 0px 0px 0px;background:linear-gradient(#ddd1c4,#cbbdae);overflow:hidden;"><span style="display:flex;align-items:center;justify-content:center;width:100%;height:100%;padding:0 0px;box-sizing:border-box;font-size:12px;color:#000;white-space:nowrap;overflow:hidden;word-spacing:1.5px;letter-spacing:0.204px;">New</span></div>
<div style="left:363.2px;top:918.7px;width:68.80000000000001px;height:18.299999999999955px;box-sizing:border-box;border:1px solid #6a6a6a;border-radius:0px 0px 0px 0px;background:linear-gradient(#ddd1c4,#cbbdae);overflow:hidden;"><span style="display:flex;align-items:center;justify-content:center;width:100%;height:100%;padding:0 0px;box-sizing:border-box;font-size:12px;color:#000;white-space:nowrap;overflow:hidden;word-spacing:1.5px;letter-spacing:0.204px;">Delete</span></div>
<div style="left:295.2px;top:936.6px;width:69.0px;height:17.399999999999977px;box-sizing:border-box;border:1px solid #6a6a6a;border-radius:0px 0px 0px 0px;background:linear-gradient(#ddd1c4,#cbbdae);overflow:hidden;"><span style="display:flex;align-items:center;justify-content:center;width:100%;height:100%;padding:0 0px;box-sizing:border-box;font-size:12px;color:#000;white-space:nowrap;overflow:hidden;word-spacing:1.5px;letter-spacing:0.204px;">Select</span></div>
<div style="left:363.2px;top:936.6px;width:68.80000000000001px;height:17.399999999999977px;box-sizing:border-box;border:1px solid #6a6a6a;border-radius:0px 0px 0px 0px;background:linear-gradient(#ddd1c4,#cbbdae);overflow:hidden;"><span style="display:flex;align-items:center;justify-content:center;width:100%;height:100%;padding:0 0px;box-sizing:border-box;font-size:12px;color:#000;white-space:nowrap;overflow:hidden;word-spacing:1.5px;letter-spacing:0.204px;">Deselect</span></div>
<div style="left:295.2px;top:953.4px;width:136.8px;height:18.100000000000023px;box-sizing:border-box;border:1px solid #6a6a6a;border-radius:0px 0px 3px 3px;background:linear-gradient(#ddd1c4,#cbbdae);overflow:hidden;"><span style="display:flex;align-items:center;justify-content:center;width:100%;height:100%;padding:0 0px;box-sizing:border-box;font-size:12px;color:#000;white-space:nowrap;overflow:hidden;word-spacing:1.5px;letter-spacing:0.204px;">Assign</span></div>
<div style="left:169px;top:984.5px;width:119.5px;height:17.5px;box-sizing:border-box;border:1px solid #3c4a4e;border-radius:3px 3px 3px 3px;background:linear-gradient(#56707a,#6a858a);overflow:hidden;"><span style="display:flex;align-items:center;justify-content:center;width:100%;height:100%;padding:0 0px;box-sizing:border-box;font-size:12px;color:#fff;white-space:nowrap;overflow:hidden;word-spacing:1.5px;letter-spacing:0.204px;">AutoTexSpace</span></div>
<div style="left:295.2px;top:984.3px;width:69.0px;height:17.700000000000045px;box-sizing:border-box;border:1px solid #6a6a6a;border-radius:3px 0px 0px 3px;background:linear-gradient(#ddd1c4,#cbbdae);overflow:hidden;"><span style="display:flex;align-items:center;justify-content:center;width:100%;height:100%;padding:0 0px;box-sizing:border-box;font-size:12px;color:#000;white-space:nowrap;overflow:hidden;word-spacing:1.5px;letter-spacing:0.204px;">Set Smooth</span></div>
<div style="left:363.2px;top:984.3px;width:68.80000000000001px;height:17.700000000000045px;box-sizing:border-box;border:1px solid #6a6a6a;border-radius:0px 3px 3px 0px;background:linear-gradient(#ddd1c4,#cbbdae);overflow:hidden;"><span style="display:flex;align-items:center;justify-content:center;width:100%;height:100%;padding:0 0px;box-sizing:border-box;font-size:12px;color:#000;white-space:nowrap;overflow:hidden;word-spacing:1.5px;letter-spacing:0.204px;">Set Solid</span></div>
<div style="left:447px;top:815px;width:278.29999999999995px;height:196px;background:#c0c0c0;border-radius:8px 8px 0 0;"></div>
<div style="left:447px;top:815px;width:278.29999999999995px;height:19px;background:#a9a9a9;border-radius:8px 8px 0 0;"></div>
<svg style="left:455px;top:819.5px" width="10" height="10"><path d="M1,1 L9,1 L5.0,9 Z" fill="#fff" /></svg>
<span class="t" style="left:475px;top:819px;font-size:12px;color:#f2f2f2;word-spacing:1.5px;letter-spacing:0.204px;">Mesh</span>
<div style="left:454.3px;top:840px;width:112.30000000000001px;height:18px;box-sizing:border-box;border:1px solid #6a7476;border-radius:3px 3px 0px 0px;background:linear-gradient(#bfd2d5,#a8bec2);overflow:hidden;"><span style="display:flex;align-items:center;justify-content:center;width:100%;height:100%;padding:0 0px;box-sizing:border-box;font-size:12px;color:#000;white-space:nowrap;overflow:hidden;word-spacing:1.5px;letter-spacing:0.204px;">Auto Smooth</span></div>
<div style="left:454.3px;top:857.4px;width:112.30000000000001px;height:17.800000000000068px;box-sizing:border-box;border:1px solid #6a6a6a;border-radius:0px 0px 3px 3px;background:linear-gradient(#a2a2a2,#b4b4b4);overflow:hidden;"><span style="display:flex;align-items:center;justify-content:center;width:100%;height:100%;padding:0 0px;box-sizing:border-box;font-size:12px;color:#000;white-space:nowrap;overflow:hidden;word-spacing:1.5px;letter-spacing:0.204px;">Degr: 30</span></div>
<svg style="left:459.3px;top:862.3px" width="5" height="8"><path d="M4.5,0.5 L0.5,4 L4.5,7.5 Z" fill="#6a6a6a"/></svg>
<svg style="left:556.6px;top:862.3px" width="5" height="8"><path d="M0.5,0.5 L4.5,4 L0.5,7.5 Z" fill="#6a6a6a"/></svg>
<div style="left:454.3px;top:883.3px;width:112.30000000000001px;height:17.700000000000045px;box-sizing:border-box;border:1px solid #6a7476;border-radius:3px 3px 3px 3px;background:linear-gradient(#bfd2d5,#a8bec2);overflow:hidden;"><span style="display:flex;align-items:center;justify-content:center;width:100%;height:100%;padding:0 0px;box-sizing:border-box;font-size:12px;color:#000;white-space:nowrap;overflow:hidden;word-spacing:1.5px;letter-spacing:0.204px;">Retopo</span></div>
<div style="left:454.3px;top:927.3px;width:43.19999999999999px;height:16.700000000000045px;box-sizing:border-box;border:1px solid #6a6a6a;border-radius:0px 0px 0px 0px;background:linear-gradient(#ddd1c4,#cbbdae);overflow:hidden;"><span style="display:flex;align-items:center;justify-content:center;width:100%;height:100%;padding:0 0px;box-sizing:border-box;font-size:12px;color:#000;white-space:nowrap;overflow:hidden;word-spacing:1.5px;letter-spacing:0.204px;">Center</span></div>
<div style="left:496.5px;top:927.3px;width:70.10000000000002px;height:16.700000000000045px;box-sizing:border-box;border:1px solid #6a6a6a;border-radius:0px 0px 0px 0px;background:linear-gradient(#ddd1c4,#cbbdae);overflow:hidden;"><span style="display:flex;align-items:center;justify-content:center;width:100%;height:100%;padding:0 0px;box-sizing:border-box;font-size:12px;color:#000;white-space:nowrap;overflow:hidden;word-spacing:1.5px;letter-spacing:0.204px;">Center New</span></div>
<div style="left:454.3px;top:943.5px;width:112.30000000000001px;height:17.5px;box-sizing:border-box;border:1px solid #6a6a6a;border-radius:0px 0px 3px 3px;background:linear-gradient(#ddd1c4,#cbbdae);overflow:hidden;"><span style="display:flex;align-items:center;justify-content:center;width:100%;height:100%;padding:0 0px;box-sizing:border-box;font-size:12px;color:#000;white-space:nowrap;overflow:hidden;word-spacing:1.5px;letter-spacing:0.204px;">Center Cursor</span></div>
<div style="left:454.3px;top:970.3px;width:112.30000000000001px;height:17.200000000000045px;box-sizing:border-box;border:1px solid #3c4a4e;border-radius:3px 3px 0px 0px;background:linear-gradient(#56707a,#6a858a);overflow:hidden;"><span style="display:flex;align-items:center;justify-content:center;width:100%;height:100%;padding:0 0px;box-sizing:border-box;font-size:12px;color:#fff;white-space:nowrap;overflow:hidden;word-spacing:1.5px;letter-spacing:0.204px;">Double Sided</span></div>
<div style="left:454.3px;top:987.2px;width:112.30000000000001px;height:17.299999999999955px;box-sizing:border-box;border:1px solid #6a7476;border-radius:0px 0px 3px 3px;background:linear-gradient(#bfd2d5,#a8bec2);overflow:hidden;"><span style="display:flex;align-items:center;justify-content:center;width:100%;height:100%;padding:0 0px;box-sizing:border-box;font-size:12px;color:#000;white-space:nowrap;overflow:hidden;word-spacing:1.5px;letter-spacing:0.204px;">No V.Normal Flip</span></div>
<div style="left:572px;top:840px;width:146.10000000000002px;height:17.5px;box-sizing:border-box;border:1px solid #6a6a6a;border-radius:3px 3px 3px 3px;background:linear-gradient(#a8a8a8,#b8b8b8);overflow:hidden;"><span style="display:flex;align-items:center;justify-content:flex-start;width:100%;height:100%;padding:0 4px;box-sizing:border-box;font-size:12px;color:#000;white-space:nowrap;overflow:hidden;word-spacing:1.5px;letter-spacing:0.204px;">TexMesh:</span></div>
<span class="t" style="left:575.9px;top:865px;font-size:12px;color:#000;word-spacing:1.5px;letter-spacing:0.204px;">Sticky</span>
<div style="left:664.5px;top:861.7px;width:53.60000000000002px;height:16.799999999999955px;box-sizing:border-box;border:1px solid #6a6a6a;border-radius:3px 3px 3px 3px;background:linear-gradient(#ddd1c4,#cbbdae);overflow:hidden;"><span style="display:flex;align-items:center;justify-content:center;width:100%;height:100%;padding:0 0px;box-sizing:border-box;font-size:12px;color:#000;white-space:nowrap;overflow:hidden;word-spacing:1.5px;letter-spacing:0.204px;">Make</span></div>
<span class="t" style="left:576px;top:886px;font-size:12px;color:#000;word-spacing:1.5px;letter-spacing:0.204px;">UV Texture</span>
<div style="left:664.5px;top:883.8px;width:53.60000000000002px;height:17.0px;box-sizing:border-box;border:1px solid #6a6a6a;border-radius:3px 3px 3px 3px;background:linear-gradient(#ddd1c4,#cbbdae);overflow:hidden;"><span style="display:flex;align-items:center;justify-content:center;width:100%;height:100%;padding:0 0px;box-sizing:border-box;font-size:12px;color:#000;white-space:nowrap;overflow:hidden;word-spacing:1.5px;letter-spacing:0.204px;">New</span></div>
<div style="left:572px;top:905px;width:17px;height:16px;box-sizing:border-box;border:1px solid #3c4a4e;border-radius:3px 0px 0px 3px;background:linear-gradient(#56707a,#6a858a);overflow:hidden;background:linear-gradient(#6d8488,#7d9498);"></div>
<svg style="left:574px;top:906px" width="14" height="14"><path d="M4.5,1 V13 M9.5,1 V13 M1,4.5 H13 M1,9.5 H13" stroke="#111" stroke-width="1.4"/></svg>
<div style="left:588.7px;top:905px;width:17.299999999999955px;height:16px;box-sizing:border-box;border:1px solid #3c4a4e;border-radius:0px 0px 0px 0px;background:linear-gradient(#56707a,#6a858a);overflow:hidden;background:linear-gradient(#6d8488,#7d9498);"></div>
<svg style="left:591px;top:907px" width="12" height="12"><rect x="0.5" y="0.5" width="11" height="11" fill="#222"/><rect x="2" y="2" width="8" height="8" fill="#d03070"/><rect x="4" y="3" width="5" height="4" fill="#f0e020"/></svg>
<div style="left:605.6px;top:905px;width:96.39999999999998px;height:16px;box-sizing:border-box;border:1px solid #6a6a6a;border-radius:0px 0px 0px 0px;background:linear-gradient(#a8a8a8,#b8b8b8);overflow:hidden;"><span style="display:flex;align-items:center;justify-content:flex-start;width:100%;height:100%;padding:0 4px;box-sizing:border-box;font-size:12px;color:#000;white-space:nowrap;overflow:hidden;word-spacing:1.5px;letter-spacing:0.204px;">UVTex</span></div>
<div style="left:701.3px;top:905px;width:16.700000000000045px;height:16px;box-sizing:border-box;border:1px solid #5e5e5e;border-radius:0px 3px 3px 0px;background:linear-gradient(#e8e8e8,#c4c4c4);overflow:hidden;background:#c8c8c8;"><span style="display:flex;align-items:center;justify-content:center;width:100%;height:100%;padding:0 0px;box-sizing:border-box;font-size:12px;color:#000;white-space:nowrap;overflow:hidden;word-spacing:1.5px;letter-spacing:0.204px;"><b style="font-size:15px">&#x2715;</b></span></div>
<span class="t" style="left:577px;top:928px;font-size:12px;color:#000;word-spacing:1.5px;letter-spacing:0.204px;">Vertex Color</span>
<div style="left:664.5px;top:925.5px;width:53.60000000000002px;height:16.5px;box-sizing:border-box;border:1px solid #6a6a6a;border-radius:3px 3px 3px 3px;background:linear-gradient(#ddd1c4,#cbbdae);overflow:hidden;"><span style="display:flex;align-items:center;justify-content:center;width:100%;height:100%;padding:0 0px;box-sizing:border-box;font-size:12px;color:#000;white-space:nowrap;overflow:hidden;word-spacing:1.5px;letter-spacing:0.204px;">New</span></div>
<div style="left:731px;top:815px;width:278.6px;height:196px;background:#c0c0c0;border-radius:8px 8px 0 0;"></div>
<div style="left:731px;top:815px;width:278.6px;height:19px;background:#a9a9a9;border-radius:8px 8px 0 0;"></div>
<svg style="left:739px;top:819.5px" width="10" height="10"><path d="M1,1 L9,1 L5.0,9 Z" fill="#fff" /></svg>
<span class="t" style="left:759px;top:819px;font-size:12px;color:#f2f2f2;word-spacing:1.5px;letter-spacing:0.204px;">Mesh Tools</span>
<div style="left:738.4px;top:840.5px;width:45.0px;height:15.0px;box-sizing:border-box;border:1px solid #6a7476;border-radius:3px 0px 0px 3px;background:linear-gradient(#bfd2d5,#a8bec2);overflow:hidden;"><span style="display:flex;align-items:center;justify-content:center;width:100%;height:100%;padding:0 0px;box-sizing:border-box;font-size:12px;color:#000;white-space:nowrap;overflow:hidden;word-spacing:1.5px;letter-spacing:0.204px;">Beauty</span></div>
<div style="left:782.4px;top:840.5px;width:44.60000000000002px;height:15.0px;box-sizing:border-box;border:1px solid #6a7476;border-radius:0px 0px 0px 0px;background:linear-gradient(#bfd2d5,#a8bec2);overflow:hidden;"><span style="display:flex;align-items:center;justify-content:center;width:100%;height:100%;padding:0 0px;box-sizing:border-box;font-size:12px;color:#000;white-space:nowrap;overflow:hidden;word-spacing:1.5px;letter-spacing:0.204px;">Short</span></div>
<div style="left:826px;top:840.5px;width:89.5px;height:15.0px;box-sizing:border-box;border:1px solid #6a6a6a;border-radius:0px 0px 0px 0px;background:linear-gradient(#ddd1c4,#cbbdae);overflow:hidden;"><span style="display:flex;align-items:center;justify-content:center;width:100%;height:100%;padding:0 0px;box-sizing:border-box;font-size:12px;color:#000;white-space:nowrap;overflow:hidden;word-spacing:1.5px;letter-spacing:0.204px;">Subdivide</span></div>
<div style="left:914.5px;top:840.5px;width:87.5px;height:15.0px;box-sizing:border-box;border:1px solid #6a6a6a;border-radius:0px 3px 3px 0px;background:linear-gradient(#d8d8d8,#bcbcbc);overflow:hidden;"><span style="display:flex;align-items:center;justify-content:center;width:100%;height:100%;padding:0 0px;box-sizing:border-box;font-size:12px;color:#000;white-space:nowrap;overflow:hidden;word-spacing:1.5px;letter-spacing:0.204px;">Innervert</span></div>
<div style="left:985px;top:841.5px;width:16px;height:13px;background:linear-gradient(#c0c0c0,#a8a8a8)"></div>
<svg style="left:990px;top:843px" width="7" height="11"><path d="M0.5,4 L3.5,0.8 L6.5,4 Z M0.5,6.5 L3.5,9.7 L6.5,6.5 Z" fill="#555"/></svg>
<div style="left:738.4px;top:855.2px;width:65.89999999999998px;height:17.299999999999955px;box-sizing:border-box;border:1px solid #6a6a6a;border-radius:0px 0px 0px 0px;background:linear-gradient(#ddd1c4,#cbbdae);overflow:hidden;"><span style="display:flex;align-items:center;justify-content:center;width:100%;height:100%;padding:0 0px;box-sizing:border-box;font-size:12px;color:#000;white-space:nowrap;overflow:hidden;word-spacing:1.5px;letter-spacing:0.204px;">Noise</span></div>
<div style="left:803.3px;top:855.2px;width:67.20000000000005px;height:17.299999999999955px;box-sizing:border-box;border:1px solid #6a6a6a;border-radius:0px 0px 0px 0px;background:linear-gradient(#ddd1c4,#cbbdae);overflow:hidden;"><span style="display:flex;align-items:center;justify-content:center;width:100%;height:100%;padding:0 0px;box-sizing:border-box;font-size:12px;color:#000;white-space:nowrap;overflow:hidden;word-spacing:1.5px;letter-spacing:0.204px;">Hash</span></div>
<div style="left:869.5px;top:855.2px;width:65.79999999999995px;height:17.299999999999955px;box-sizing:border-box;border:1px solid #6a6a6a;border-radius:0px 0px 0px 0px;background:linear-gradient(#ddd1c4,#cbbdae);overflow:hidden;"><span style="display:flex;align-items:center;justify-content:center;width:100%;height:100%;padding:0 0px;box-sizing:border-box;font-size:12px;color:#000;white-space:nowrap;overflow:hidden;word-spacing:1.5px;letter-spacing:0.204px;">Xsort</span></div>
<div style="left:934.3px;top:855.2px;width:67.70000000000005px;height:17.299999999999955px;box-sizing:border-box;border:1px solid #6a6a6a;border-radius:0px 0px 0px 0px;background:linear-gradient(#ddd1c4,#cbbdae);overflow:hidden;"><span style="display:flex;align-items:center;justify-content:center;width:100%;height:100%;padding:0 0px;box-sizing:border-box;font-size:12px;color:#000;white-space:nowrap;overflow:hidden;word-spacing:1.5px;letter-spacing:0.204px;">Fractal</span></div>
<div style="left:738.4px;top:872.2px;width:65.89999999999998px;height:16.799999999999955px;box-sizing:border-box;border:1px solid #6a6a6a;border-radius:0px 0px 0px 0px;background:linear-gradient(#ddd1c4,#cbbdae);overflow:hidden;"><span style="display:flex;align-items:center;justify-content:center;width:100%;height:100%;padding:0 0px;box-sizing:border-box;font-size:12px;color:#000;white-space:nowrap;overflow:hidden;word-spacing:1.5px;letter-spacing:0.204px;">To Sphere</span></div>
<div style="left:803.3px;top:872.2px;width:67.20000000000005px;height:16.799999999999955px;box-sizing:border-box;border:1px solid #6a6a6a;border-radius:0px 0px 0px 0px;background:linear-gradient(#ddd1c4,#cbbdae);overflow:hidden;"><span style="display:flex;align-items:center;justify-content:center;width:100%;height:100%;padding:0 0px;box-sizing:border-box;font-size:12px;color:#000;white-space:nowrap;overflow:hidden;word-spacing:1.5px;letter-spacing:0.204px;">Smooth</span></div>
<div style="left:869.5px;top:872.2px;width:65.79999999999995px;height:16.799999999999955px;box-sizing:border-box;border:1px solid #6a6a6a;border-radius:0px 0px 0px 0px;background:linear-gradient(#ddd1c4,#cbbdae);overflow:hidden;"><span style="display:flex;align-items:center;justify-content:center;width:100%;height:100%;padding:0 0px;box-sizing:border-box;font-size:12px;color:#000;white-space:nowrap;overflow:hidden;word-spacing:1.5px;letter-spacing:0.204px;">Split</span></div>
<div style="left:934.3px;top:872.2px;width:67.70000000000005px;height:16.799999999999955px;box-sizing:border-box;border:1px solid #6a6a6a;border-radius:0px 0px 0px 0px;background:linear-gradient(#ddd1c4,#cbbdae);overflow:hidden;"><span style="display:flex;align-items:center;justify-content:center;width:100%;height:100%;padding:0 0px;box-sizing:border-box;font-size:12px;color:#000;white-space:nowrap;overflow:hidden;word-spacing:1.5px;letter-spacing:0.204px;">Flip Normal</span></div>
<div style="left:738.4px;top:888.7px;width:65.89999999999998px;height:16.299999999999955px;box-sizing:border-box;border:1px solid #6a6a6a;border-radius:0px 0px 0px 3px;background:linear-gradient(#ddd1c4,#cbbdae);overflow:hidden;"><span style="display:flex;align-items:center;justify-content:center;width:100%;height:100%;padding:0 0px;box-sizing:border-box;font-size:12px;color:#000;white-space:nowrap;overflow:hidden;word-spacing:1.5px;letter-spacing:0.204px;">Rem Doubl</span></div>
<div style="left:803.3px;top:888.7px;width:99.20000000000005px;height:16.299999999999955px;box-sizing:border-box;border:1px solid #6a6a6a;border-radius:0px 0px 0px 0px;background:linear-gradient(#a2a2a2,#b4b4b4);overflow:hidden;"><span style="display:flex;align-items:center;justify-content:center;width:100%;height:100%;padding:0 0px;box-sizing:border-box;font-size:12px;color:#000;white-space:nowrap;overflow:hidden;word-spacing:1.5px;letter-spacing:0.204px;">Limit: 0.001</span></div>
<svg style="left:808.3px;top:892.85px" width="5" height="8"><path d="M4.5,0.5 L0.5,4 L4.5,7.5 Z" fill="#6a6a6a"/></svg>
<svg style="left:892.5px;top:892.85px" width="5" height="8"><path d="M0.5,0.5 L4.5,4 L0.5,7.5 Z" fill="#6a6a6a"/></svg>
<div style="left:901.5px;top:888.7px;width:100.5px;height:16.299999999999955px;box-sizing:border-box;border:1px solid #6a6a6a;border-radius:0px 0px 3px 0px;background:linear-gradient(#a2a2a2,#b4b4b4);overflow:hidden;"><span style="display:flex;align-items:center;justify-content:center;width:100%;height:100%;padding:0 0px;box-sizing:border-box;font-size:12px;color:#000;white-space:nowrap;overflow:hidden;word-spacing:1.5px;letter-spacing:0.204px;">Threshold: 0.010</span></div>
<svg style="left:906.5px;top:892.85px" width="5" height="8"><path d="M4.5,0.5 L0.5,4 L4.5,7.5 Z" fill="#6a6a6a"/></svg>
<svg style="left:992px;top:892.85px" width="5" height="8"><path d="M0.5,0.5 L4.5,4 L0.5,7.5 Z" fill="#6a6a6a"/></svg>
<div style="left:738.4px;top:909.7px;width:263.6px;height:19.799999999999955px;box-sizing:border-box;border:1px solid #6a6a6a;border-radius:3px 3px 3px 3px;background:linear-gradient(#ddd1c4,#cbbdae);overflow:hidden;"><span style="display:flex;align-items:center;justify-content:center;width:100%;height:100%;padding:0 0px;box-sizing:border-box;font-size:12px;color:#000;white-space:nowrap;overflow:hidden;word-spacing:1.5px;letter-spacing:0.204px;">Extrude</span></div>
<div style="left:738.4px;top:934.6px;width:84.89999999999998px;height:18.899999999999977px;box-sizing:border-box;border:1px solid #6a6a6a;border-radius:0px 0px 0px 0px;background:linear-gradient(#ddd1c4,#cbbdae);overflow:hidden;"><span style="display:flex;align-items:center;justify-content:center;width:100%;height:100%;padding:0 0px;box-sizing:border-box;font-size:12px;color:#000;white-space:nowrap;overflow:hidden;word-spacing:1.5px;letter-spacing:0.204px;">Spin</span></div>
<div style="left:822.3px;top:934.6px;width:84.0px;height:18.899999999999977px;box-sizing:border-box;border:1px solid #6a6a6a;border-radius:0px 0px 0px 0px;background:linear-gradient(#ddd1c4,#cbbdae);overflow:hidden;"><span style="display:flex;align-items:center;justify-content:center;width:100%;height:100%;padding:0 0px;box-sizing:border-box;font-size:12px;color:#000;white-space:nowrap;overflow:hidden;word-spacing:1.5px;letter-spacing:0.204px;">Spin Dup</span></div>
<div style="left:905.3px;top:934.6px;width:96.70000000000005px;height:18.899999999999977px;box-sizing:border-box;border:1px solid #6a6a6a;border-radius:0px 0px 0px 0px;background:linear-gradient(#ddd1c4,#cbbdae);overflow:hidden;"><span style="display:flex;align-items:center;justify-content:center;width:100%;height:100%;padding:0 0px;box-sizing:border-box;font-size:12px;color:#000;white-space:nowrap;overflow:hidden;word-spacing:1.5px;letter-spacing:0.204px;">Screw</span></div>
<div style="left:738.4px;top:953.2px;width:84.89999999999998px;height:17.0px;box-sizing:border-box;border:1px solid #6a6a6a;border-radius:0px 0px 0px 0px;background:linear-gradient(#a2a2a2,#b4b4b4);overflow:hidden;"><span style="display:flex;align-items:center;justify-content:center;width:100%;height:100%;padding:0 0px;box-sizing:border-box;font-size:12px;color:#000;white-space:nowrap;overflow:hidden;word-spacing:1.5px;letter-spacing:0.204px;">Degr: 90.00</span></div>
<svg style="left:743.4px;top:957.7px" width="5" height="8"><path d="M4.5,0.5 L0.5,4 L4.5,7.5 Z" fill="#6a6a6a"/></svg>
<svg style="left:813.3px;top:957.7px" width="5" height="8"><path d="M0.5,0.5 L4.5,4 L0.5,7.5 Z" fill="#6a6a6a"/></svg>
<div style="left:822.3px;top:953.2px;width:84.0px;height:17.0px;box-sizing:border-box;border:1px solid #6a6a6a;border-radius:0px 0px 0px 0px;background:linear-gradient(#a2a2a2,#b4b4b4);overflow:hidden;"><span style="display:flex;align-items:center;justify-content:center;width:100%;height:100%;padding:0 0px;box-sizing:border-box;font-size:12px;color:#000;white-space:nowrap;overflow:hidden;word-spacing:1.5px;letter-spacing:0.204px;">Steps: 9</span></div>
<svg style="left:827.3px;top:957.7px" width="5" height="8"><path d="M4.5,0.5 L0.5,4 L4.5,7.5 Z" fill="#6a6a6a"/></svg>
<svg style="left:896.3px;top:957.7px" width="5" height="8"><path d="M0.5,0.5 L4.5,4 L0.5,7.5 Z" fill="#6a6a6a"/></svg>
<div style="left:905.3px;top:953.2px;width:96.70000000000005px;height:17.0px;box-sizing:border-box;border:1px solid #6a6a6a;border-radius:0px 0px 0px 0px;background:linear-gradient(#a2a2a2,#b4b4b4);overflow:hidden;"><span style="display:flex;align-items:center;justify-content:center;width:100%;height:100%;padding:0 0px;box-sizing:border-box;font-size:12px;color:#000;white-space:nowrap;overflow:hidden;word-spacing:1.5px;letter-spacing:0.204px;">Turns: 1</span></div>
<svg style="left:910.3px;top:957.7px" width="5" height="8"><path d="M4.5,0.5 L0.5,4 L4.5,7.5 Z" fill="#6a6a6a"/></svg>
<svg style="left:992px;top:957.7px" width="5" height="8"><path d="M0.5,0.5 L4.5,4 L0.5,7.5 Z" fill="#6a6a6a"/></svg>
<div style="left:738.4px;top:969.9px;width:167.89999999999998px;height:17.100000000000023px;box-sizing:border-box;border:1px solid #6a7476;border-radius:0px 0px 0px 3px;background:linear-gradient(#bfd2d5,#a8bec2);overflow:hidden;"><span style="display:flex;align-items:center;justify-content:center;width:100%;height:100%;padding:0 0px;box-sizing:border-box;font-size:12px;color:#000;white-space:nowrap;overflow:hidden;word-spacing:1.5px;letter-spacing:0.204px;">Keep Original</span></div>
<div style="left:905.3px;top:969.9px;width:96.70000000000005px;height:17.100000000000023px;box-sizing:border-box;border:1px solid #3c4a4e;border-radius:0px 0px 3px 0px;background:linear-gradient(#56707a,#6a858a);overflow:hidden;"><span style="display:flex;align-items:center;justify-content:center;width:100%;height:100%;padding:0 0px;box-sizing:border-box;font-size:12px;color:#fff;white-space:nowrap;overflow:hidden;word-spacing:1.5px;letter-spacing:0.204px;">Clockwise</span></div>
<div style="left:738.4px;top:991.6px;width:127.30000000000007px;height:15.899999999999977px;box-sizing:border-box;border:1px solid #6a6a6a;border-radius:3px 0px 0px 3px;background:linear-gradient(#ddd1c4,#cbbdae);overflow:hidden;"><span style="display:flex;align-items:center;justify-content:center;width:100%;height:100%;padding:0 0px;box-sizing:border-box;font-size:12px;color:#000;white-space:nowrap;overflow:hidden;word-spacing:1.5px;letter-spacing:0.204px;">Extrude Dup</span></div>
<div style="left:864.7px;top:991.6px;width:137.29999999999995px;height:15.899999999999977px;box-sizing:border-box;border:1px solid #6a6a6a;border-radius:0px 3px 3px 0px;background:linear-gradient(#a2a2a2,#b4b4b4);overflow:hidden;"><span style="display:flex;align-items:center;justify-content:center;width:100%;height:100%;padding:0 0px;box-sizing:border-box;font-size:12px;color:#000;white-space:nowrap;overflow:hidden;word-spacing:1.5px;letter-spacing:0.204px;">Offset: 1.00</span></div>
<svg style="left:869.7px;top:995.55px" width="5" height="8"><path d="M4.5,0.5 L0.5,4 L4.5,7.5 Z" fill="#6a6a6a"/></svg>
<svg style="left:992px;top:995.55px" width="5" height="8"><path d="M0.5,0.5 L4.5,4 L0.5,7.5 Z" fill="#6a6a6a"/></svg>
<div style="left:738.4px;top:1016px;width:102.10000000000002px;height:14px;box-sizing:border-box;border:1px solid #6a6a6a;border-radius:3px 0px 0px 0px;background:linear-gradient(#ddd1c4,#cbbdae);overflow:hidden;"></div>
<div style="left:839.5px;top:1016px;width:162.5px;height:14px;box-sizing:border-box;border:1px solid #6a6a6a;border-radius:0px 3px 0px 0px;background:linear-gradient(#a2a2a2,#b4b4b4);overflow:hidden;"></div>
<div style="left:1016px;top:815px;width:278px;height:196px;background:#c0c0c0;border-radius:8px 8px 0 0;"></div>
<div style="left:1016px;top:815px;width:278px;height:19px;background:#a9a9a9;border-radius:8px 8px 0 0;"></div>
<svg style="left:1024px;top:819.5px" width="10" height="10"><path d="M1,1 L9,1 L5.0,9 Z" fill="#fff" /></svg>
<div style="left:1042px;top:817.5px;width:76px;height:16.5px;background:#8e8e8e;border-radius:7px 7px 0 0;"></div>
<span class="t" style="left:1054px;top:820px;font-size:12px;color:#d8d8d8;word-spacing:1.5px;letter-spacing:0.204px;">Multires</span>
<div style="left:1120px;top:817.5px;width:76px;height:16.5px;background:#8e8e8e;border-radius:7px 7px 0 0;"></div>
<span class="t" style="left:1132px;top:820px;font-size:12px;color:#d8d8d8;word-spacing:1.5px;letter-spacing:0.204px;">UV Calculat</span>
<div style="left:1196px;top:817.5px;width:79px;height:16.5px;background:#c0c0c0;border-radius:7px 7px 0 0;"></div>
<span class="t" style="left:1208.5px;top:820px;font-size:12px;color:#000;word-spacing:1.5px;letter-spacing:0.204px;">Texture Fac</span>
<span class="t" style="left:1027.7px;top:843px;font-size:12px;color:#000;word-spacing:1.5px;letter-spacing:0.204px;">Active Face Mode</span>
<div style="left:1242px;top:840px;width:43.5px;height:17px;box-sizing:border-box;border:1px solid #6a6a6a;border-radius:3px 3px 3px 3px;background:linear-gradient(#ddd1c4,#cbbdae);overflow:hidden;"><span style="display:flex;align-items:center;justify-content:center;width:100%;height:100%;padding:0 0px;box-sizing:border-box;font-size:12px;color:#000;white-space:nowrap;overflow:hidden;word-spacing:1.5px;letter-spacing:0.204px;">Copy</span></div>
<div style="left:1024.3px;top:861.7px;width:53.200000000000045px;height:16.799999999999955px;box-sizing:border-box;border:1px solid #3c4a4e;border-radius:3px 0px 0px 3px;background:linear-gradient(#56707a,#6a858a);overflow:hidden;"><span style="display:flex;align-items:center;justify-content:center;width:100%;height:100%;padding:0 0px;box-sizing:border-box;font-size:12px;color:#fff;white-space:nowrap;overflow:hidden;word-spacing:1.5px;letter-spacing:0.204px;">Tex</span></div>
<div style="left:1076.5px;top:861.7px;width:53.09999999999991px;height:16.799999999999955px;box-sizing:border-box;border:1px solid #6a7476;border-radius:0px 0px 0px 0px;background:linear-gradient(#bfd2d5,#a8bec2);overflow:hidden;"><span style="display:flex;align-items:center;justify-content:center;width:100%;height:100%;padding:0 0px;box-sizing:border-box;font-size:12px;color:#000;white-space:nowrap;overflow:hidden;word-spacing:1.5px;letter-spacing:0.204px;">Tiles</span></div>
<div style="left:1128.6px;top:861.7px;width:53.40000000000009px;height:16.799999999999955px;box-sizing:border-box;border:1px solid #6a7476;border-radius:0px 0px 0px 0px;background:linear-gradient(#bfd2d5,#a8bec2);overflow:hidden;"><span style="display:flex;align-items:center;justify-content:center;width:100%;height:100%;padding:0 0px;box-sizing:border-box;font-size:12px;color:#000;white-space:nowrap;overflow:hidden;word-spacing:1.5px;letter-spacing:0.204px;">Light</span></div>
<div style="left:1181px;top:861.7px;width:53.299999999999955px;height:16.799999999999955px;box-sizing:border-box;border:1px solid #6a7476;border-radius:0px 0px 0px 0px;background:linear-gradient(#bfd2d5,#a8bec2);overflow:hidden;"><span style="display:flex;align-items:center;justify-content:center;width:100%;height:100%;padding:0 0px;box-sizing:border-box;font-size:12px;color:#000;white-space:nowrap;overflow:hidden;word-spacing:1.5px;letter-spacing:0.204px;">Invisible</span></div>
<div style="left:1233.3px;top:861.7px;width:52.200000000000045px;height:16.799999999999955px;box-sizing:border-box;border:1px solid #3c4a4e;border-radius:0px 3px 3px 0px;background:linear-gradient(#56707a,#6a858a);overflow:hidden;"><span style="display:flex;align-items:center;justify-content:center;width:100%;height:100%;padding:0 0px;box-sizing:border-box;font-size:12px;color:#fff;white-space:nowrap;overflow:hidden;word-spacing:1.5px;letter-spacing:0.204px;">Collision</span></div>
<div style="left:1024.3px;top:883.8px;width:53.200000000000045px;height:16.40000000000009px;box-sizing:border-box;border:1px solid #6a7476;border-radius:3px 0px 0px 3px;background:linear-gradient(#bfd2d5,#a8bec2);overflow:hidden;"><span style="display:flex;align-items:center;justify-content:center;width:100%;height:100%;padding:0 0px;box-sizing:border-box;font-size:12px;color:#000;white-space:nowrap;overflow:hidden;word-spacing:1.5px;letter-spacing:0.204px;">Shared</span></div>
<div style="left:1076.5px;top:883.8px;width:53.09999999999991px;height:16.40000000000009px;box-sizing:border-box;border:1px solid #6a7476;border-radius:0px 0px 0px 0px;background:linear-gradient(#bfd2d5,#a8bec2);overflow:hidden;"><span style="display:flex;align-items:center;justify-content:center;width:100%;height:100%;padding:0 0px;box-sizing:border-box;font-size:12px;color:#000;white-space:nowrap;overflow:hidden;word-spacing:1.5px;letter-spacing:0.204px;">Twoside</span></div>
<div style="left:1128.6px;top:883.8px;width:52.40000000000009px;height:16.40000000000009px;box-sizing:border-box;border:1px solid #6a7476;border-radius:0px 3px 3px 0px;background:linear-gradient(#bfd2d5,#a8bec2);overflow:hidden;"><span style="display:flex;align-items:center;justify-content:center;width:100%;height:100%;padding:0 0px;box-sizing:border-box;font-size:12px;color:#000;white-space:nowrap;overflow:hidden;word-spacing:1.5px;letter-spacing:0.204px;">ObColor</span></div>
<div style="left:1024.3px;top:905.4px;width:53.200000000000045px;height:16.399999999999977px;box-sizing:border-box;border:1px solid #6a7476;border-radius:3px 0px 0px 3px;background:linear-gradient(#bfd2d5,#a8bec2);overflow:hidden;"><span style="display:flex;align-items:center;justify-content:center;width:100%;height:100%;padding:0 0px;box-sizing:border-box;font-size:12px;color:#000;white-space:nowrap;overflow:hidden;word-spacing:1.5px;letter-spacing:0.204px;">Halo</span></div>
<div style="left:1076.5px;top:905.4px;width:53.09999999999991px;height:16.399999999999977px;box-sizing:border-box;border:1px solid #6a7476;border-radius:0px 0px 0px 0px;background:linear-gradient(#bfd2d5,#a8bec2);overflow:hidden;"><span style="display:flex;align-items:center;justify-content:center;width:100%;height:100%;padding:0 0px;box-sizing:border-box;font-size:12px;color:#000;white-space:nowrap;overflow:hidden;word-spacing:1.5px;letter-spacing:0.204px;">Billboard</span></div>
<div style="left:1128.6px;top:905.4px;width:53.40000000000009px;height:16.399999999999977px;box-sizing:border-box;border:1px solid #6a7476;border-radius:0px 0px 0px 0px;background:linear-gradient(#bfd2d5,#a8bec2);overflow:hidden;"><span style="display:flex;align-items:center;justify-content:center;width:100%;height:100%;padding:0 0px;box-sizing:border-box;font-size:12px;color:#000;white-space:nowrap;overflow:hidden;word-spacing:1.5px;letter-spacing:0.204px;">Shadow</span></div>
<div style="left:1181px;top:905.4px;width:53.299999999999955px;height:16.399999999999977px;box-sizing:border-box;border:1px solid #6a7476;border-radius:0px 0px 0px 0px;background:linear-gradient(#bfd2d5,#a8bec2);overflow:hidden;"><span style="display:flex;align-items:center;justify-content:center;width:100%;height:100%;padding:0 0px;box-sizing:border-box;font-size:12px;color:#000;white-space:nowrap;overflow:hidden;word-spacing:1.5px;letter-spacing:0.204px;">Text</span></div>
<div style="left:1233.3px;top:905.4px;width:52.200000000000045px;height:16.399999999999977px;box-sizing:border-box;border:1px solid #6a7476;border-radius:0px 3px 3px 0px;background:linear-gradient(#bfd2d5,#a8bec2);overflow:hidden;"><span style="display:flex;align-items:center;justify-content:center;width:100%;height:100%;padding:0 0px;box-sizing:border-box;font-size:12px;color:#000;white-space:nowrap;overflow:hidden;word-spacing:1.5px;letter-spacing:0.204px;">Sort</span></div>
<span class="t" style="left:1027.7px;top:938.5px;font-size:12px;color:#000;word-spacing:1.5px;letter-spacing:0.204px;">Active Face Alpha Blending (Transp)</span>
<div style="left:1242px;top:935.7px;width:43.5px;height:17.299999999999955px;box-sizing:border-box;border:1px solid #6a6a6a;border-radius:3px 3px 3px 3px;background:linear-gradient(#ddd1c4,#cbbdae);overflow:hidden;"><span style="display:flex;align-items:center;justify-content:center;width:100%;height:100%;padding:0 0px;box-sizing:border-box;font-size:12px;color:#000;white-space:nowrap;overflow:hidden;word-spacing:1.5px;letter-spacing:0.204px;">Copy</span></div>
<div style="left:1024.3px;top:957.6px;width:53.200000000000045px;height:16.199999999999932px;box-sizing:border-box;border:1px solid #6a6a6a;border-radius:3px 0px 0px 3px;background:linear-gradient(#d8d8e8,#c4c4d6);overflow:hidden;"><span style="display:flex;align-items:center;justify-content:center;width:100%;height:100%;padding:0 0px;box-sizing:border-box;font-size:12px;color:#000;white-space:nowrap;overflow:hidden;word-spacing:1.5px;letter-spacing:0.204px;">Opaque</span></div>
<div style="left:1076.5px;top:957.6px;width:53.09999999999991px;height:16.199999999999932px;box-sizing:border-box;border:1px solid #6a6a6a;border-radius:0px 0px 0px 0px;background:linear-gradient(#d8d8e8,#c4c4d6);overflow:hidden;"><span style="display:flex;align-items:center;justify-content:center;width:100%;height:100%;padding:0 0px;box-sizing:border-box;font-size:12px;color:#000;white-space:nowrap;overflow:hidden;word-spacing:1.5px;letter-spacing:0.204px;">Add</span></div>
<div style="left:1128.6px;top:957.6px;width:53.40000000000009px;height:16.199999999999932px;box-sizing:border-box;border:1px solid #3c4a4e;border-radius:0px 0px 0px 0px;background:linear-gradient(#56707a,#6a858a);overflow:hidden;"><span style="display:flex;align-items:center;justify-content:center;width:100%;height:100%;padding:0 0px;box-sizing:border-box;font-size:12px;color:#fff;white-space:nowrap;overflow:hidden;word-spacing:1.5px;letter-spacing:0.204px;">Alpha</span></div>
<div style="left:1181px;top:957.6px;width:69.59999999999991px;height:16.199999999999932px;box-sizing:border-box;border:1px solid #6a6a6a;border-radius:0px 3px 3px 0px;background:linear-gradient(#d8d8e8,#c4c4d6);overflow:hidden;"><span style="display:flex;align-items:center;justify-content:center;width:100%;height:100%;padding:0 0px;box-sizing:border-box;font-size:12px;color:#000;white-space:nowrap;overflow:hidden;word-spacing:1.5px;letter-spacing:0.204px;">Clip Alpha</span></div>
<div style="left:1118.2px;top:953.7px;width:74.7px;height:28.1px;background:#00ff00;mix-blend-mode:overlay;"></div>
<div style="left:1024.3px;top:987.4px;width:88.10000000000014px;height:17.200000000000045px;box-sizing:border-box;border:1px solid #6a6a6a;border-radius:3px 0px 0px 3px;background:linear-gradient(#ddd1c4,#cbbdae);overflow:hidden;"><span style="display:flex;align-items:center;justify-content:center;width:100%;height:100%;padding:0 0px;box-sizing:border-box;font-size:12px;color:#000;white-space:nowrap;overflow:hidden;word-spacing:1.5px;letter-spacing:0.204px;">CopyUV</span></div>
<div style="left:1111.4px;top:987.4px;width:87.69999999999982px;height:17.200000000000045px;box-sizing:border-box;border:1px solid #6a6a6a;border-radius:0px 0px 0px 0px;background:linear-gradient(#ddd1c4,#cbbdae);overflow:hidden;"><span style="display:flex;align-items:center;justify-content:center;width:100%;height:100%;padding:0 0px;box-sizing:border-box;font-size:12px;color:#000;white-space:nowrap;overflow:hidden;word-spacing:1.5px;letter-spacing:0.204px;">CopyTex</span></div>
<div style="left:1198.1px;top:987.4px;width:87.40000000000009px;height:17.200000000000045px;box-sizing:border-box;border:1px solid #6a6a6a;border-radius:0px 3px 3px 0px;background:linear-gradient(#ddd1c4,#cbbdae);overflow:hidden;"><span style="display:flex;align-items:center;justify-content:center;width:100%;height:100%;padding:0 0px;box-sizing:border-box;font-size:12px;color:#000;white-space:nowrap;overflow:hidden;word-spacing:1.5px;letter-spacing:0.204px;">CopyColor</span></div>
<div style="left:1300px;top:815px;width:278.5px;height:195.5px;background:#c0c0c0;border-radius:8px 8px 0 0;"></div>
<div style="left:1300px;top:815px;width:278.5px;height:18.5px;background:#a9a9a9;border-radius:8px 8px 0 0;"></div>
<svg style="left:1308px;top:819.5px" width="10" height="10"><path d="M1,1 L9,1 L5.0,9 Z" fill="#fff" /></svg>
<div style="left:1326px;top:817px;width:116px;height:16.5px;background:#c0c0c0;border-radius:7px 7px 0 0;"></div>
<span class="t" style="left:1339.2px;top:820px;font-size:12px;color:#000;word-spacing:1.5px;letter-spacing:0.204px;">Modifiers</span>
<div style="left:1441.7px;top:817px;width:116px;height:16.5px;background:#8e8e8e;border-radius:7px 7px 0 0;"></div>
<span class="t" style="left:1455.4px;top:820px;font-size:12px;color:#d8d8d8;word-spacing:1.5px;letter-spacing:0.204px;">Shapes</span>
<div style="left:1308px;top:840.1px;width:113.70000000000005px;height:17.600000000000023px;box-sizing:border-box;border:1px solid #6a6a6a;border-radius:2px 2px 2px 2px;background:linear-gradient(#d8d8d8,#bcbcbc);overflow:hidden;"><span style="display:flex;align-items:center;justify-content:flex-start;width:100%;height:100%;padding:0 5px;box-sizing:border-box;font-size:12px;color:#000;white-space:nowrap;overflow:hidden;word-spacing:1.5px;letter-spacing:0.204px;">Add Modifier</span></div>
<span class="t" style="left:1434.1px;top:843.5px;font-size:12px;color:#000;word-spacing:1.5px;letter-spacing:0.204px;">To: Cube</span>
<div style="left:1585px;top:815px;width:115px;height:196px;background:#c0c0c0;border-radius:8px 8px 0 0;"></div>
<div style="left:1585px;top:815px;width:115px;height:19px;background:#a9a9a9;border-radius:8px 8px 0 0;"></div>
<svg style="left:1593px;top:819.5px" width="10" height="10"><path d="M1,1 L9,1 L5.0,9 Z" fill="#fff" /></svg>
<span class="t" style="left:1613px;top:819px;font-size:12px;color:#f2f2f2;word-spacing:1.5px;letter-spacing:0.204px;">Mesh Tools</span>
<div style="left:1592.2px;top:840.6px;width:83.29999999999995px;height:12.899999999999977px;box-sizing:border-box;border:1px solid #6a6a6a;border-radius:3px 3px 3px 3px;background:linear-gradient(#ddd1c4,#cbbdae);overflow:hidden;"><span style="display:flex;align-items:center;justify-content:center;width:100%;height:100%;padding:0 0px;box-sizing:border-box;font-size:12px;color:#000;white-space:nowrap;overflow:hidden;word-spacing:1.5px;letter-spacing:0.204px;">Select Swap</span></div>
<div style="left:1675px;top:840.6px;width:10px;height:13px;background:linear-gradient(#ddd1c4,#cbbdae);border:1px solid #6a6a6a;box-sizing:border-box;"></div>
<div style="left:1592.2px;top:860.3px;width:119.79999999999995px;height:14.700000000000045px;box-sizing:border-box;border:1px solid #6a6a6a;border-radius:3px 0px 0px 0px;background:linear-gradient(#a2a2a2,#b4b4b4);overflow:hidden;"><span style="display:flex;align-items:center;justify-content:center;width:100%;height:100%;padding:0 0px;box-sizing:border-box;font-size:12px;color:#000;white-space:nowrap;overflow:hidden;word-spacing:1.5px;letter-spacing:0.204px;">NSize: 0.10</span></div>
<svg style="left:1597.2px;top:863.65px" width="5" height="8"><path d="M4.5,0.5 L0.5,4 L4.5,7.5 Z" fill="#6a6a6a"/></svg>
<svg style="left:1702px;top:863.65px" width="5" height="8"><path d="M0.5,0.5 L4.5,4 L0.5,7.5 Z" fill="#6a6a6a"/></svg>
<div style="left:1592.2px;top:874.5px;width:119.79999999999995px;height:14.5px;box-sizing:border-box;border:1px solid #6a7476;border-radius:0px 0px 0px 0px;background:linear-gradient(#bfd2d5,#a8bec2);overflow:hidden;"><span style="display:flex;align-items:center;justify-content:center;width:100%;height:100%;padding:0 0px;box-sizing:border-box;font-size:12px;color:#000;white-space:nowrap;overflow:hidden;word-spacing:1.5px;letter-spacing:0.204px;">Draw Normals</span></div>
<div style="left:1592.2px;top:888.8px;width:119.79999999999995px;height:14.200000000000045px;box-sizing:border-box;border:1px solid #6a7476;border-radius:0px 0px 0px 3px;background:linear-gradient(#bfd2d5,#a8bec2);overflow:hidden;"><span style="display:flex;align-items:center;justify-content:center;width:100%;height:100%;padding:0 0px;box-sizing:border-box;font-size:12px;color:#000;white-space:nowrap;overflow:hidden;word-spacing:1.5px;letter-spacing:0.204px;">Draw VNormals</span></div>
<div style="left:1592.2px;top:915.7px;width:119.79999999999995px;height:14.799999999999955px;box-sizing:border-box;border:1px solid #3c4a4e;border-radius:3px 0px 0px 0px;background:linear-gradient(#56707a,#6a858a);overflow:hidden;"><span style="display:flex;align-items:center;justify-content:center;width:100%;height:100%;padding:0 0px;box-sizing:border-box;font-size:12px;color:#fff;white-space:nowrap;overflow:hidden;word-spacing:1.5px;letter-spacing:0.204px;">Draw Faces</span></div>
<div style="left:1592.2px;top:930.2px;width:119.79999999999995px;height:15.299999999999955px;box-sizing:border-box;border:1px solid #3c4a4e;border-radius:0px 0px 0px 0px;background:linear-gradient(#56707a,#6a858a);overflow:hidden;"><span style="display:flex;align-items:center;justify-content:center;width:100%;height:100%;padding:0 0px;box-sizing:border-box;font-size:12px;color:#fff;white-space:nowrap;overflow:hidden;word-spacing:1.5px;letter-spacing:0.204px;">Draw Edges</span></div>
<div style="left:1592.2px;top:945.1px;width:119.79999999999995px;height:15.399999999999977px;box-sizing:border-box;border:1px solid #6a7476;border-radius:0px 0px 0px 0px;background:linear-gradient(#bfd2d5,#a8bec2);overflow:hidden;"><span style="display:flex;align-items:center;justify-content:center;width:100%;height:100%;padding:0 0px;box-sizing:border-box;font-size:12px;color:#000;white-space:nowrap;overflow:hidden;word-spacing:1.5px;letter-spacing:0.204px;">Draw Creases</span></div>
<div style="left:1592.2px;top:960.1px;width:119.79999999999995px;height:15.899999999999977px;box-sizing:border-box;border:1px solid #6a7476;border-radius:0px 0px 0px 0px;background:linear-gradient(#bfd2d5,#a8bec2);overflow:hidden;"><span style="display:flex;align-items:center;justify-content:center;width:100%;height:100%;padding:0 0px;box-sizing:border-box;font-size:12px;color:#000;white-space:nowrap;overflow:hidden;word-spacing:1.5px;letter-spacing:0.204px;">Draw Bevel Weights</span></div>
<div style="left:1592.2px;top:975.6px;width:119.79999999999995px;height:15.399999999999977px;box-sizing:border-box;border:1px solid #6a7476;border-radius:0px 0px 0px 0px;background:linear-gradient(#bfd2d5,#a8bec2);overflow:hidden;"><span style="display:flex;align-items:center;justify-content:center;width:100%;height:100%;padding:0 0px;box-sizing:border-box;font-size:12px;color:#000;white-space:nowrap;overflow:hidden;word-spacing:1.5px;letter-spacing:0.204px;">Draw Seams</span></div>
<div style="left:1592.2px;top:990.5px;width:119.79999999999995px;height:14.0px;box-sizing:border-box;border:1px solid #6a7476;border-radius:0px 0px 0px 3px;background:linear-gradient(#bfd2d5,#a8bec2);overflow:hidden;"><span style="display:flex;align-items:center;justify-content:center;width:100%;height:100%;padding:0 0px;box-sizing:border-box;font-size:12px;color:#000;white-space:nowrap;overflow:hidden;word-spacing:1.5px;letter-spacing:0.204px;">Draw Sharp</span></div>
<div style="left:1px;top:996.7px;width:90.5px;height:22px;background:#2a2a2a;border-radius:5px;"></div>
<svg style="left:4px;top:1002px" width="4" height="14"><circle cx="1.5" cy="1.5" r="1" fill="#ccc"/><circle cx="1.5" cy="6" r="1" fill="#ccc"/><circle cx="1.5" cy="10.5" r="1" fill="#ccc"/></svg>
<svg style="left:9.5px;top:1001.6px" width="14" height="14"><circle cx="7" cy="7" r="6.6" fill="#0000ee"/></svg>
<span class="t" style="left:13.5px;top:1003.5px;font-size:10px;color:#fff;word-spacing:1.25px;letter-spacing:0.17px;font-weight:bold;">1</span>
<svg style="left:29.5px;top:1001.6px" width="14" height="14"><circle cx="7" cy="7" r="6.6" fill="#6b9be8"/></svg>
<span class="t" style="left:33.5px;top:1003.5px;font-size:10px;color:#fff;word-spacing:1.25px;letter-spacing:0.17px;font-weight:bold;">2</span>
<svg style="left:49.5px;top:1001.6px" width="14" height="14"><circle cx="7" cy="7" r="6.6" fill="#6b9be8"/></svg>
<span class="t" style="left:53.5px;top:1003.5px;font-size:10px;color:#fff;word-spacing:1.25px;letter-spacing:0.17px;font-weight:bold;">3</span>
<svg style="left:69.5px;top:1001.6px" width="14" height="14"><circle cx="7" cy="7" r="6.6" fill="#6b9be8"/></svg>
<span class="t" style="left:73.5px;top:1003.5px;font-size:10px;color:#fff;word-spacing:1.25px;letter-spacing:0.17px;font-weight:bold;">4</span>
<div style="left:0px;top:1019px;width:1680px;height:2px;background:#454545"></div>
<svg style="left:13px;top:1015px" width="34" height="6"><ellipse cx="17" cy="12" rx="15" ry="11" fill="#a8c4d8" stroke="#223" stroke-width="1"/></svg>
<svg style="left:1078px;top:47px" width="600" height="704" viewBox="1078 47 600 704">
<defs><pattern id="dst" width="2" height="2" patternUnits="userSpaceOnUse"><rect width="2" height="2" fill="#000"/><rect width="1" height="1" fill="#5c5c5c"/></pattern>
<filter id="b3"><feGaussianBlur stdDeviation="0.9"/></filter></defs>
<rect x="1122" y="321" width="513" height="156" fill="url(#dst)"/>
<g filter="url(#b3)" transform="matrix(1.9506 0 0 1.95 1122 321)"><g fill="none" stroke="#fff" stroke-linecap="round" stroke-linejoin="round">
 <path d="M25,28.5 L25,35" stroke-width="4.64"/>
 <rect x="20.2" y="36" width="9.6" height="15" rx="3.5" stroke-width="3.33"/>
 <path d="M25,51 L25,53" stroke-width="3.77"/>
 <path d="M58.5,29 L44,36 L36.5,43.5 L42,45 L31.5,54.8 L58.5,44.2 L50,41.6 L54,38 Z" fill="#fff" stroke="#fff" stroke-width="0.72"/>
 <path d="M138,31.5 C131,28.5 112,28.5 106.5,35 C103,39.5 104,47 110,48.5 C116,50 124,49.5 130,48.5 M128,32 C136,29.5 150,30.5 153,36.5 C156,43 150,50 141,51.5 C133,52.5 127,51 124,48" stroke-width="3.04"/>
 <path d="M108,46.5 L117,46.5 M118,45 C124,41 130,36 137,34 M142,36 C146,38 146,40 141,42 C138,43 135,44 133,46 M130,50 C134,47 138,45 146,44" stroke-width="2.61"/>
 <circle cx="234.8" cy="45.3" r="14.6" stroke-width="2.90"/>
 <path d="M237.2,28.5 L237.6,25.7 M245.3,31.9 L247.0,29.7 M250.6,38.9 L253.2,37.9 M251.6,47.7 L254.4,48.1 M248.2,55.8 L250.4,57.5 M241.2,61.1 L242.2,63.7 M232.4,62.1 L232.0,64.9 M224.3,58.7 L222.6,60.9 M219.0,51.7 L216.4,52.7 M218.0,42.9 L215.2,42.5 M221.4,34.8 L219.2,33.1 M228.4,29.5 L227.4,26.9" stroke-width="5.22"/>
 <path d="M228,41.5 L234,40.5 M242,47 C241,50 240,52 238,53 M230,52 C232,51 234,52 235,54" stroke-width="2.61"/>
</g></g>
<rect x="1122.5" y="321.5" width="512" height="155" fill="none" stroke="#e8e860" stroke-width="1"/>
<path d="M1097,477.5 H1148 M1122.5,452 V503" stroke="#fff" stroke-width="1" stroke-dasharray="1 1"/>
<path d="M1122.5,466 L1134,477.5 L1122.5,489 L1111,477.5 Z" fill="none" stroke="#fff" stroke-width="1"/>
<path d="M1122.5,466 L1134,477.5 L1122.5,489 L1111,477.5 Z" fill="none" stroke="#d00" stroke-width="1" stroke-dasharray="3 3"/>
<rect x="1121" y="320" width="3" height="3" fill="#ffff80"/><rect x="1633" y="320" width="3" height="3" fill="#ffff80"/><rect x="1121" y="476" width="3" height="3" fill="#ffff80"/><rect x="1633" y="476" width="3" height="3" fill="#ffff80"/>
</svg>
<div style="left:1077.4px;top:594px;width:222.5999999999999px;height:157px;background:#6f6f6f;border-radius:8px 8px 0 0;"></div>
<div style="left:1077.4px;top:594px;width:222.5999999999999px;height:16px;background:#a3a3a3;border-radius:8px 8px 0 0;"></div>
<svg style="left:1081px;top:597px" width="9" height="9"><path d="M1,1 L8,8 M8,1 L1,8" stroke="#fff" stroke-width="1.8"/></svg>
<svg style="left:1094.5px;top:598px" width="10" height="9"><path d="M1,1 L9,1 L5.0,8 Z" fill="#fff" /></svg>
<span class="t" style="left:1113px;top:597.5px;font-size:10px;color:#f4f4f4;word-spacing:1.25px;letter-spacing:0.17px;">Image Properties</span>
<div style="left:1083.5px;top:615px;width:42.5px;height:13.5px;box-sizing:border-box;border:1px solid #3c4a4e;border-radius:3px 0px 0px 3px;background:linear-gradient(#56707a,#6a858a);overflow:hidden;"><span style="display:flex;align-items:center;justify-content:center;width:100%;height:100%;padding:0 0px;box-sizing:border-box;font-size:10px;color:#fff;white-space:nowrap;overflow:hidden;word-spacing:1.25px;letter-spacing:0.17px;">Still</span></div>
<div style="left:1125px;top:615px;width:43.40000000000009px;height:13.5px;box-sizing:border-box;border:1px solid #6a7476;border-radius:0px 0px 0px 0px;background:linear-gradient(#bfd2d5,#a8bec2);overflow:hidden;"><span style="display:flex;align-items:center;justify-content:center;width:100%;height:100%;padding:0 0px;box-sizing:border-box;font-size:10px;color:#000;white-space:nowrap;overflow:hidden;word-spacing:1.25px;letter-spacing:0.17px;">Movie</span></div>
<div style="left:1167.4px;top:615px;width:64.09999999999991px;height:13.5px;box-sizing:border-box;border:1px solid #6a7476;border-radius:0px 0px 0px 0px;background:linear-gradient(#bfd2d5,#a8bec2);overflow:hidden;"><span style="display:flex;align-items:center;justify-content:center;width:100%;height:100%;padding:0 0px;box-sizing:border-box;font-size:10px;color:#000;white-space:nowrap;overflow:hidden;word-spacing:1.25px;letter-spacing:0.17px;">Sequence</span></div>
<div style="left:1230.5px;top:615px;width:63.0px;height:13.5px;box-sizing:border-box;border:1px solid #6a7476;border-radius:0px 3px 3px 0px;background:linear-gradient(#bfd2d5,#a8bec2);overflow:hidden;"><span style="display:flex;align-items:center;justify-content:center;width:100%;height:100%;padding:0 0px;box-sizing:border-box;font-size:10px;color:#000;white-space:nowrap;overflow:hidden;word-spacing:1.25px;letter-spacing:0.17px;">Generated</span></div>
<div style="left:1083.5px;top:632px;width:16.5px;height:13.5px;box-sizing:border-box;border:1px solid #6a6a6a;border-radius:3px 0px 0px 0px;background:linear-gradient(#a2a2a2,#b4b4b4);overflow:hidden;"></div>
<svg style="left:1088.5px;top:633.5px" width="7" height="11"><path d="M0.5,4 L3.5,0.8 L6.5,4 Z M0.5,6.5 L3.5,9.7 L6.5,6.5 Z" fill="#555"/></svg>
<div style="left:1099px;top:632px;width:125.5px;height:13.5px;box-sizing:border-box;border:1px solid #6a6a6a;border-radius:0px 0px 0px 0px;background:linear-gradient(#a8a8a8,#b8b8b8);overflow:hidden;"><span style="display:flex;align-items:center;justify-content:flex-start;width:100%;height:100%;padding:0 3px;box-sizing:border-box;font-size:10px;color:#000;white-space:nowrap;overflow:hidden;word-spacing:1.25px;letter-spacing:0.17px;">IM:iconos.png</span></div>
<div style="left:1223.5px;top:632px;width:42.5px;height:13.5px;box-sizing:border-box;border:1px solid #6a6a6a;border-radius:0px 0px 0px 0px;background:linear-gradient(#ddd1c4,#cbbdae);overflow:hidden;"><span style="display:flex;align-items:center;justify-content:center;width:100%;height:100%;padding:0 0px;box-sizing:border-box;font-size:10px;color:#000;white-space:nowrap;overflow:hidden;word-spacing:1.25px;letter-spacing:0.17px;">Reload</span></div>
<div style="left:1265px;top:632px;width:15.599999999999909px;height:13.5px;box-sizing:border-box;border:1px solid #6a6a6a;border-radius:0px 0px 0px 0px;background:linear-gradient(#ddd1c4,#cbbdae);overflow:hidden;"><span style="display:flex;align-items:center;justify-content:center;width:100%;height:100%;padding:0 0px;box-sizing:border-box;font-size:10px;color:#000;white-space:nowrap;overflow:hidden;word-spacing:1.25px;letter-spacing:0.17px;"><b>&#x2715;</b></span></div>
<div style="left:1279.6px;top:632px;width:13.900000000000091px;height:13.5px;box-sizing:border-box;border:1px solid #6a6a6a;border-radius:0px 3px 0px 0px;background:linear-gradient(#ddd1c4,#cbbdae);overflow:hidden;"><span style="display:flex;align-items:center;justify-content:flex-start;width:100%;height:100%;padding:0 3px;box-sizing:border-box;font-size:10px;color:#000;white-space:nowrap;overflow:hidden;word-spacing:1.25px;letter-spacing:0.17px;">1</span></div>
<div style="left:1083.5px;top:646px;width:16.5px;height:13.5px;box-sizing:border-box;border:1px solid #6a6a6a;border-radius:0px 0px 0px 3px;background:linear-gradient(#ddd1c4,#cbbdae);overflow:hidden;"></div>
<svg style="left:1086px;top:647px" width="12" height="12"><ellipse cx="6" cy="6" rx="5" ry="4" fill="#ddd" stroke="#333" stroke-width="1.2" transform="rotate(-35 6 6)"/><path d="M2,9 L10,3" stroke="#333" stroke-width="1.2"/></svg>
<div style="left:1099px;top:646px;width:181px;height:13.5px;box-sizing:border-box;border:1px solid #6a6a6a;border-radius:0px 0px 0px 0px;background:linear-gradient(#a8a8a8,#b8b8b8);overflow:hidden;"><span style="display:flex;align-items:center;justify-content:flex-start;width:100%;height:100%;padding:0 2px;box-sizing:border-box;font-size:10px;color:#000;white-space:nowrap;overflow:hidden;word-spacing:1.25px;letter-spacing:0.17px;">mara Fotografica\textures\iconos.png</span></div>
<div style="left:1279px;top:646px;width:14.5px;height:13.5px;box-sizing:border-box;border:1px solid #6a6a6a;border-radius:0px 0px 3px 0px;background:linear-gradient(#a2a2a2,#b4b4b4);overflow:hidden;"></div>
<span class="t" style="left:1086.5px;top:663px;font-size:10px;color:#f0f0f0;word-spacing:1.25px;letter-spacing:0.17px;">Image : size 263 x 80, RGBA byte</span>
<div style="left:1083.5px;top:690.7px;width:46.5px;height:13.799999999999955px;box-sizing:border-box;border:1px solid #6a7476;border-radius:0px 0px 0px 0px;background:linear-gradient(#bfd2d5,#a8bec2);overflow:hidden;"><span style="display:flex;align-items:center;justify-content:center;width:100%;height:100%;padding:0 0px;box-sizing:border-box;font-size:10px;color:#000;white-space:nowrap;overflow:hidden;word-spacing:1.25px;letter-spacing:0.17px;">Fields</span></div>
<div style="left:1129px;top:690.7px;width:31px;height:13.799999999999955px;box-sizing:border-box;border:1px solid #6a7476;border-radius:0px 0px 0px 0px;background:linear-gradient(#bfd2d5,#a8bec2);overflow:hidden;"><span style="display:flex;align-items:center;justify-content:center;width:100%;height:100%;padding:0 0px;box-sizing:border-box;font-size:10px;color:#000;white-space:nowrap;overflow:hidden;word-spacing:1.25px;letter-spacing:0.17px;">Odd</span></div>
<div style="left:1083.5px;top:704.5px;width:33.0px;height:13.799999999999955px;box-sizing:border-box;border:1px solid #6a7476;border-radius:0px 0px 0px 3px;background:linear-gradient(#bfd2d5,#a8bec2);overflow:hidden;"><span style="display:flex;align-items:center;justify-content:center;width:100%;height:100%;padding:0 0px;box-sizing:border-box;font-size:10px;color:#000;white-space:nowrap;overflow:hidden;word-spacing:1.25px;letter-spacing:0.17px;">Anti</span></div>
<div style="left:1115.5px;top:704.5px;width:44.5px;height:13.799999999999955px;box-sizing:border-box;border:1px solid #3c4a4e;border-radius:0px 0px 3px 0px;background:linear-gradient(#56707a,#6a858a);overflow:hidden;"><span style="display:flex;align-items:center;justify-content:center;width:100%;height:100%;padding:0 0px;box-sizing:border-box;font-size:10px;color:#fff;white-space:nowrap;overflow:hidden;word-spacing:1.25px;letter-spacing:0.17px;">Premul</span></div>
<div style="left:1110.9px;top:700.3px;width:53.2px;height:22.7px;background:#00ff00;mix-blend-mode:overlay;"></div>
<div style="left:1083.5px;top:732.9px;width:100.90000000000009px;height:13.200000000000045px;box-sizing:border-box;border:1px solid #6a6a6a;border-radius:3px 3px 3px 3px;background:linear-gradient(#a2a2a2,#b4b4b4);overflow:hidden;"><span style="display:flex;align-items:center;justify-content:center;width:100%;height:100%;padding:0 0px;box-sizing:border-box;font-size:10px;color:#000;white-space:nowrap;overflow:hidden;word-spacing:1.25px;letter-spacing:0.17px;">Median X: 131.50</span></div>
<svg style="left:1086.5px;top:735.5px" width="5" height="8"><path d="M4.5,0.5 L0.5,4 L4.5,7.5 Z" fill="#6a6a6a"/></svg>
<svg style="left:1176.4px;top:735.5px" width="5" height="8"><path d="M0.5,0.5 L4.5,4 L0.5,7.5 Z" fill="#6a6a6a"/></svg>
<div style="left:1191.8px;top:732.9px;width:101.70000000000005px;height:13.200000000000045px;box-sizing:border-box;border:1px solid #6a6a6a;border-radius:3px 3px 3px 3px;background:linear-gradient(#a2a2a2,#b4b4b4);overflow:hidden;"><span style="display:flex;align-items:center;justify-content:center;width:100%;height:100%;padding:0 0px;box-sizing:border-box;font-size:10px;color:#000;white-space:nowrap;overflow:hidden;word-spacing:1.25px;letter-spacing:0.17px;">Median Y: 40.00</span></div>
<svg style="left:1194.8px;top:735.5px" width="5" height="8"><path d="M4.5,0.5 L0.5,4 L4.5,7.5 Z" fill="#6a6a6a"/></svg>
<svg style="left:1285.5px;top:735.5px" width="5" height="8"><path d="M0.5,0.5 L4.5,4 L0.5,7.5 Z" fill="#6a6a6a"/></svg>
</body></html>
